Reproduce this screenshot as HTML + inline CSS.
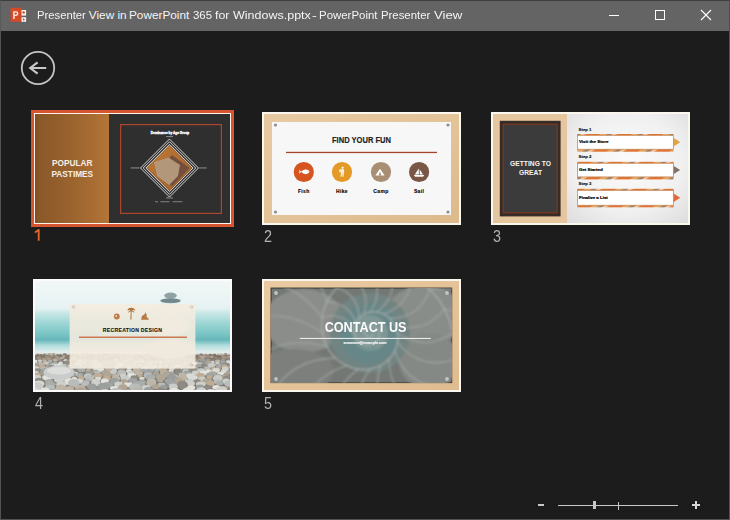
<!DOCTYPE html>
<html><head><meta charset="utf-8">
<style>
*{margin:0;padding:0;box-sizing:border-box}
html,body{width:730px;height:520px;overflow:hidden;background:#1c1c1c;font-family:"Liberation Sans",sans-serif}
.a{position:absolute}
#win{position:absolute;left:0;top:0;width:730px;height:520px;background:#1c1c1c;border-left:1px solid #525252;border-right:1px solid #525252;border-bottom:1px solid #525252}
#tb{position:absolute;left:0;top:0;width:730px;height:31px;background:#646464;border-top:1px solid #3e3e3e;border-right:1px solid #4e4e4e;border-left:1px solid #5a5a5a}
.tw{transform-origin:0 0;position:absolute;top:8px;font-size:11.8px;color:#f4f4f4;white-space:nowrap;line-height:14px}
.num{position:absolute;font-size:15.6px;line-height:16px;color:#b0b0b0;transform:scaleX(0.92);transform-origin:0 0}
.thumb{position:absolute;width:195px;height:109px;overflow:hidden}
</style></head>
<body>
<div id="win"></div>
<div id="tb"></div>
<!-- ppt icon -->
<svg class="a" style="left:8px;top:6px" width="22" height="18" viewBox="0 0 22 18">
<rect x="2.6" y="1.8" width="11.2" height="14" fill="#d64a25"/>
<path d="M5.2 13V5.2H8.2Q10.4 5.2 10.4 7.6Q10.4 10 8.2 10H6.7V13Z M6.7 6.5V8.7H8Q8.9 8.7 8.9 7.6Q8.9 6.5 8 6.5Z" fill="#fbe6de"/>
<rect x="13.5" y="4" width="4.6" height="5.6" fill="#f8f0ec"/>
<rect x="13.5" y="11.2" width="4.6" height="4.6" fill="#f8f0ec"/>
<circle cx="15.6" cy="6.4" r="1.2" fill="#c4482a"/>
<path d="M15 12.3L17 13.5L15 14.7Z" fill="#c4482a"/>
</svg>
<span class="tw" style="left:36.5px;transform:scaleX(0.955)">Presenter</span><span class="tw" style="left:88.8px;transform:scaleX(1.0)">View</span><span class="tw" style="left:117.5px;transform:scaleX(1.0)">in</span><span class="tw" style="left:129px;transform:scaleX(1.0)">PowerPoint</span><span class="tw" style="left:193.3px;transform:scaleX(0.97)">365</span><span class="tw" style="left:214.5px;transform:scaleX(1.05)">for</span><span class="tw" style="left:232.6px;transform:scaleX(1.06)">Windows.pptx</span><span class="tw" style="left:311.8px;transform:scaleX(1.2)">-</span><span class="tw" style="left:319.2px;transform:scaleX(0.97)">PowerPoint</span><span class="tw" style="left:381.3px;transform:scaleX(0.963)">Presenter</span><span class="tw" style="left:433.8px;transform:scaleX(1.12)">View</span>
<!-- window controls -->
<div class="a" style="left:609px;top:15px;width:10px;height:1px;background:#fff"></div>
<div class="a" style="left:655px;top:10px;width:10px;height:10px;border:1px solid #fff"></div>
<svg class="a" style="left:700px;top:9px" width="12" height="12" viewBox="0 0 12 12"><path d="M1 1L11 11M11 1L1 11" stroke="#fff" stroke-width="1.1"/></svg>

<!-- back button -->
<svg class="a" style="left:20px;top:50px" width="36" height="36" viewBox="0 0 36 36">
<circle cx="18" cy="18" r="16.2" fill="none" stroke="#c4c4c4" stroke-width="1.8"/>
<path d="M10.5 18H26.2M17.6 12.4L10.2 18L17.6 23.6" fill="none" stroke="#c8c8c8" stroke-width="2.1" stroke-linejoin="miter"/>
</svg>

<!-- slide 1 selected frame -->
<div class="a" style="left:31px;top:110px;width:203px;height:117px;border:3px solid #d65530"></div>
<div class="a" style="left:34px;top:113px;width:197px;height:111px;border:1px solid #fff4e8"></div>
<div class="thumb" style="left:35px;top:114px;background:#2f2f2f">
<svg width="195" height="109" viewBox="0 0 195 109" style="display:block">
<defs>
<linearGradient id="g1" x1="0" x2="1" y1="0" y2="0"><stop offset="0" stop-color="#7a4f24"/><stop offset="0.05" stop-color="#8a5828"/><stop offset="0.5" stop-color="#9b632e"/><stop offset="0.85" stop-color="#ac6f34"/><stop offset="1" stop-color="#b47638"/></linearGradient>
<linearGradient id="g1b" x1="0" x2="1" y1="0" y2="1"><stop offset="0" stop-color="#c27a35"/><stop offset="1" stop-color="#9a6030"/></linearGradient>
<filter id="b1" x="-20%" y="-20%" width="140%" height="140%"><feGaussianBlur stdDeviation="0.35"/></filter>
</defs>
<rect x="0" y="0" width="74" height="109" fill="url(#g1)"/>
<rect x="85.6" y="10.6" width="100.8" height="88.8" fill="none" stroke="#a8462e" stroke-width="1.25"/>
<g transform="translate(37.3 0) scale(0.89 1)"><text x="0" y="52.4" font-family="Liberation Sans" font-weight="bold" font-size="9.3" fill="#f7efe6" text-anchor="middle">POPULAR</text>
<text x="0" y="63.3" font-family="Liberation Sans" font-weight="bold" font-size="9.3" fill="#f7efe6" text-anchor="middle">PASTIMES</text></g>
<text x="135" y="20.3" font-family="Liberation Sans" font-weight="bold" font-size="3.15" fill="#fff" stroke="#fff" stroke-width="0.3" text-anchor="middle">Dominance by Age Group</text>
<g transform="translate(134.5 54)" filter="url(#b1)">
<path d="M0 -23 L23 0 L0 23 L-23 0Z" fill="url(#g1b)"/>
<path d="M2.5 -13 L20 0 L2.5 18.5 L-12 4Z" fill="#74503c"/>
<path d="M-15.5 -6 L-1 -10.5 L10.5 -3 L8.5 8 L-0.5 17 L-12.5 8Z" fill="#b3977a"/>
<path d="M0 -29 L29 0 L0 29 L-29 0Z" fill="none" stroke="#e4e4e4" stroke-width="0.9"/>
<path d="M0 -26.3 L26.3 0 L0 26.3 L-26.3 0Z" fill="none" stroke="#e4e4e4" stroke-width="0.9"/>
<path d="M0 -23.6 L23.6 0 L0 23.6 L-23.6 0Z" fill="none" stroke="#e4e4e4" stroke-width="0.9"/>
<rect x="-3.5" y="-31.8" width="7" height="0.9" fill="#9a9a9a"/>
<rect x="-38.8" y="-0.5" width="9" height="0.9" fill="#9a9a9a"/>
<rect x="29.8" y="-0.5" width="7.4" height="0.9" fill="#9a9a9a"/>
<rect x="-3.5" y="29.5" width="7" height="0.9" fill="#9a9a9a"/>
<rect x="-14.5" y="33.3" width="3" height="0.9" fill="#8a8a8a"/>
<rect x="-9" y="33.3" width="9" height="0.9" fill="#8a8a8a"/>
<rect x="3" y="33.3" width="10" height="0.9" fill="#8a8a8a"/>
</g>
</svg></div>
<svg class="a" style="left:33px;top:228px" width="10" height="14" viewBox="0 0 10 14"><path d="M4.6 1.2H6.6V12.8H4.8V3.6Q3.6 4.6 1.8 5.2V3.4Q3.6 2.6 4.6 1.2Z" fill="#e56a2a"/></svg>

<!-- slide 2 -->
<div class="a" style="left:262px;top:112px;width:199px;height:113px;background:#fbf7ef"></div>
<div class="thumb" style="left:264px;top:114px;background:#e2c79f">
<svg width="195" height="109" viewBox="0 0 195 109" style="display:block">
<defs>
<linearGradient id="g2" x1="0" x2="1" y1="0" y2="1"><stop offset="0" stop-color="#e8caa2"/><stop offset="0.5" stop-color="#e3c398"/><stop offset="1" stop-color="#dcba8c"/></linearGradient>
</defs>
<rect width="195" height="109" fill="url(#g2)"/>
<rect x="8" y="8" width="179" height="93" fill="#f7f7f8"/>
<circle cx="11.5" cy="11" r="1.6" fill="#8e8e8e"/>
<circle cx="184" cy="11" r="1.6" fill="#8e8e8e"/>
<circle cx="11.5" cy="98" r="1.6" fill="#8e8e8e"/>
<circle cx="184" cy="98" r="1.6" fill="#8e8e8e"/>
<g transform="translate(97.5 0) scale(0.9 1)"><text x="0" y="29" font-family="Liberation Sans" font-weight="bold" font-size="8.4" fill="#222" stroke="#222" stroke-width="0.15" text-anchor="middle">FIND YOUR FUN</text></g>
<rect x="22" y="37.8" width="151" height="1.3" fill="#a3452b"/>
<circle cx="39.8" cy="58" r="10.1" fill="#d5541f"/>
<circle cx="78" cy="58" r="10.1" fill="#e39a26"/>
<circle cx="117" cy="58" r="10.1" fill="#a88f74"/>
<circle cx="155.1" cy="58" r="10.1" fill="#795646"/>
<path d="M35 55.6 L37.3 57.8 L35 60 L35.6 57.8Z M37 57.8 Q40 54.6 43.5 55.8 Q45.3 56.6 45.6 57.8 Q45.3 59 43.5 59.8 Q40 61 37 57.8Z" fill="#fff"/>
<circle cx="44" cy="57.3" r="0.4" fill="#d5541f"/>
<path d="M78.6 52.4 a1.15 1.15 0 1 1 -0.01 0Z M77.3 54.9 L79.6 55.1 L80.4 58 L79.8 58.4 L79.7 62.8 L78.6 62.8 L78.3 59.6 L77.5 62.8 L76.3 62.8 L77.1 58.8 L76.6 57.6Z M75.4 55.4 L77 55 L76.6 58.4 L75.1 58.2Z" fill="#fbeede"/>
<path d="M116 54.8 L120.6 61.6 L111.4 61.6Z" fill="#fff"/><path d="M116 57.6 L117.4 61.6 L114.6 61.6Z" fill="#a88f74"/>
<path d="M154.8 54.6 L154.8 60.4 L150.8 60.4Z M155.7 55.4 L159 60.4 L155.7 60.4Z M149.8 61 L160.4 61 L159 62.8 L151.2 62.8Z" fill="#fff"/>
<text x="39.8" y="78.6" font-family="Liberation Sans" font-weight="bold" font-size="5" fill="#000" stroke="#000" stroke-width="0.12" letter-spacing="0.35" text-anchor="middle">Fish</text>
<text x="78" y="78.6" font-family="Liberation Sans" font-weight="bold" font-size="5" fill="#000" stroke="#000" stroke-width="0.12" letter-spacing="0.35" text-anchor="middle">Hike</text>
<text x="117" y="78.6" font-family="Liberation Sans" font-weight="bold" font-size="5" fill="#000" stroke="#000" stroke-width="0.12" letter-spacing="0.35" text-anchor="middle">Camp</text>
<text x="155.1" y="78.6" font-family="Liberation Sans" font-weight="bold" font-size="5" fill="#000" stroke="#000" stroke-width="0.12" letter-spacing="0.35" text-anchor="middle">Sail</text>
</svg></div>
<div class="num" style="left:264px;top:229px">2</div>

<!-- slide 3 -->
<div class="a" style="left:491px;top:112px;width:199px;height:113px;background:#fbf7ef"></div>
<div class="thumb" style="left:493px;top:114px;background:#eee">
<svg width="195" height="109" viewBox="0 0 195 109" style="display:block">
<defs>
<radialGradient id="g3" cx="0.5" cy="0.45" r="0.75"><stop offset="0" stop-color="#fbfbfb"/><stop offset="0.6" stop-color="#f0f0f0"/><stop offset="1" stop-color="#dcdcdc"/></radialGradient>
<pattern id="stripes" width="18" height="18" patternUnits="userSpaceOnUse" patternTransform="rotate(55)">
<rect width="18" height="18" fill="#de7332"/><rect x="6" width="4" height="18" fill="#e6a660"/><rect x="10" width="3" height="18" fill="#a37d66"/><rect x="13" width="2.5" height="18" fill="#f0c8a0"/>
</pattern>
</defs>
<rect x="74" width="121" height="109" fill="url(#g3)"/>
<rect width="74" height="109" fill="#e5c69e"/>
<rect x="6.8" y="6.8" width="60.8" height="95.6" fill="#352c27"/>
<rect x="10.2" y="10.2" width="54" height="88.6" fill="#3c3b3b" stroke="#84391e" stroke-width="1.1"/>
<g transform="translate(37.5 0) scale(0.92 1)"><text x="0" y="52.4" font-family="Liberation Sans" font-weight="bold" font-size="7.3" fill="#f4f4f4" text-anchor="middle">GETTING TO</text>
<text x="0" y="61.2" font-family="Liberation Sans" font-weight="bold" font-size="7.3" fill="#f4f4f4" text-anchor="middle">GREAT</text></g>
<text x="85.6" y="17.4" font-family="Liberation Sans" font-weight="bold" font-size="4.3" fill="#111" stroke="#111" stroke-width="0.15">Step 1</text>
<rect x="84.3" y="20" width="96.2" height="17.7" fill="url(#stripes)"/>
<path d="M180 23.6 L187.2 28.2 L180 32.8Z" fill="#e0a445"/>
<rect x="84.5" y="21.4" width="95.8" height="13.8" fill="#fff" stroke="#c88a5a" stroke-width="0.7"/>
<text x="86" y="29.2" font-family="Liberation Sans" font-weight="bold" font-size="4.4" fill="#000" stroke="#000" stroke-width="0.22">Visit the Store</text>
<text x="85.6" y="43.8" font-family="Liberation Sans" font-weight="bold" font-size="4.3" fill="#111" stroke="#111" stroke-width="0.15">Step 2</text>
<rect x="84.3" y="47.8" width="96.2" height="17.6" fill="url(#stripes)"/>
<path d="M180 51.4 L187.2 56 L180 60.6Z" fill="#85716a"/>
<rect x="84.5" y="49.3" width="95.8" height="13.6" fill="#fff" stroke="#c88a5a" stroke-width="0.7"/>
<text x="86" y="57.2" font-family="Liberation Sans" font-weight="bold" font-size="4.4" fill="#000" stroke="#000" stroke-width="0.22">Get Started</text>
<text x="85.6" y="71.4" font-family="Liberation Sans" font-weight="bold" font-size="4.3" fill="#111" stroke="#111" stroke-width="0.15">Step 3</text>
<rect x="84.3" y="74.8" width="96.2" height="18.5" fill="url(#stripes)"/>
<path d="M180 79 L187.2 83.8 L180 88.6Z" fill="#e36a3a"/>
<rect x="84.5" y="76.5" width="95.8" height="14.7" fill="#fff" stroke="#c88a5a" stroke-width="0.7"/>
<text x="86" y="85.1" font-family="Liberation Sans" font-weight="bold" font-size="4.4" fill="#000" stroke="#000" stroke-width="0.22">Finalize a List</text>

</svg></div>
<div class="num" style="left:493px;top:229px">3</div>

<!-- slide 4 -->
<div class="a" style="left:33px;top:279px;width:199px;height:113px;background:#fbfbfb"></div>
<div class="thumb" style="left:35px;top:281px;background:#cfd8d4">
<svg width="195" height="109" viewBox="0 0 195 109" style="display:block">
<defs>
<linearGradient id="g4" x1="0" x2="0" y1="0" y2="1">
<stop offset="0" stop-color="#f2f7f7"/><stop offset="0.25" stop-color="#e6f2f2"/><stop offset="0.3" stop-color="#c4e6e5"/>
<stop offset="0.4" stop-color="#98d4d2"/><stop offset="0.48" stop-color="#7cc6c6"/><stop offset="0.54" stop-color="#66b6b9"/>
<stop offset="0.59" stop-color="#b0dcdc"/><stop offset="0.655" stop-color="#e4eeee"/><stop offset="0.685" stop-color="#c8c2b6"/><stop offset="0.73" stop-color="#b8b0a2"/><stop offset="1" stop-color="#a8a092"/>
</linearGradient>
<filter id="bl4" x="-5%" y="-5%" width="110%" height="110%"><feGaussianBlur stdDeviation="0.75"/></filter>
<filter id="bl4b"><feGaussianBlur stdDeviation="1.2"/></filter>
<filter id="bl4s" x="-20%" y="-20%" width="140%" height="140%"><feGaussianBlur stdDeviation="0.3"/></filter>
</defs>
<rect width="195" height="109" fill="url(#g4)"/>
<g filter="url(#bl4)"><rect x="0" y="74" width="195" height="40" fill="#857b70"/><ellipse cx="-1.5" cy="74.7" rx="2.0" ry="1.3" fill="#b4aa9c"/><ellipse cx="2.8" cy="74.0" rx="1.8" ry="1.3" fill="#8a7e72"/><ellipse cx="6.1" cy="73.9" rx="1.3" ry="0.8" fill="#7e746a"/><ellipse cx="9.7" cy="73.9" rx="2.1" ry="1.4" fill="#9a8e80"/><ellipse cx="14.4" cy="73.1" rx="2.1" ry="1.2" fill="#b4aa9c"/><ellipse cx="18.5" cy="73.0" rx="1.8" ry="0.9" fill="#a89c8c"/><ellipse cx="22.2" cy="73.9" rx="1.4" ry="0.9" fill="#9a8e80"/><ellipse cx="25.6" cy="74.3" rx="1.6" ry="1.0" fill="#8a7e72"/><ellipse cx="29.7" cy="73.4" rx="2.1" ry="1.1" fill="#8a7e72"/><ellipse cx="34.6" cy="75.0" rx="2.2" ry="1.5" fill="#7e746a"/><ellipse cx="38.8" cy="73.4" rx="1.9" ry="1.2" fill="#b4aa9c"/><ellipse cx="43.4" cy="74.9" rx="2.2" ry="1.3" fill="#a89c8c"/><ellipse cx="47.5" cy="73.1" rx="1.6" ry="1.0" fill="#a89c8c"/><ellipse cx="51.3" cy="73.0" rx="2.0" ry="1.4" fill="#b4aa9c"/><ellipse cx="55.4" cy="74.2" rx="1.9" ry="1.2" fill="#7e746a"/><ellipse cx="59.6" cy="74.3" rx="1.9" ry="1.0" fill="#8a7e72"/><ellipse cx="63.6" cy="73.5" rx="1.6" ry="1.1" fill="#a89c8c"/><ellipse cx="67.7" cy="73.7" rx="2.2" ry="1.2" fill="#b4aa9c"/><ellipse cx="72.3" cy="73.8" rx="2.0" ry="1.4" fill="#8a7e72"/><ellipse cx="77.2" cy="74.0" rx="2.3" ry="1.4" fill="#a89c8c"/><ellipse cx="81.3" cy="74.1" rx="1.5" ry="1.1" fill="#8a7e72"/><ellipse cx="84.8" cy="74.7" rx="1.7" ry="1.1" fill="#9a8e80"/><ellipse cx="88.2" cy="73.5" rx="1.6" ry="0.9" fill="#b4aa9c"/><ellipse cx="92.2" cy="75.0" rx="2.2" ry="1.4" fill="#8a7e72"/><ellipse cx="96.7" cy="74.8" rx="1.8" ry="1.0" fill="#7e746a"/><ellipse cx="101.0" cy="74.6" rx="2.3" ry="1.6" fill="#a89c8c"/><ellipse cx="105.7" cy="74.8" rx="1.9" ry="1.1" fill="#7e746a"/><ellipse cx="109.4" cy="74.5" rx="1.4" ry="0.9" fill="#8a7e72"/><ellipse cx="112.9" cy="73.5" rx="2.0" ry="1.4" fill="#9a8e80"/><ellipse cx="116.7" cy="73.5" rx="1.5" ry="1.1" fill="#b4aa9c"/><ellipse cx="120.8" cy="73.3" rx="2.3" ry="1.6" fill="#8a7e72"/><ellipse cx="124.9" cy="73.1" rx="1.5" ry="1.0" fill="#8a7e72"/><ellipse cx="128.1" cy="73.8" rx="1.6" ry="0.9" fill="#a89c8c"/><ellipse cx="132.2" cy="73.4" rx="1.9" ry="1.0" fill="#b4aa9c"/><ellipse cx="136.6" cy="74.7" rx="2.1" ry="1.3" fill="#7e746a"/><ellipse cx="141.3" cy="74.7" rx="2.1" ry="1.0" fill="#b4aa9c"/><ellipse cx="145.5" cy="73.5" rx="1.9" ry="1.3" fill="#8a7e72"/><ellipse cx="149.4" cy="73.3" rx="1.6" ry="0.8" fill="#b4aa9c"/><ellipse cx="153.8" cy="74.0" rx="2.3" ry="1.6" fill="#7e746a"/><ellipse cx="158.3" cy="74.5" rx="1.8" ry="0.9" fill="#7e746a"/><ellipse cx="162.4" cy="74.5" rx="1.6" ry="1.1" fill="#7e746a"/><ellipse cx="166.1" cy="73.7" rx="1.9" ry="1.1" fill="#8a7e72"/><ellipse cx="170.6" cy="74.3" rx="2.3" ry="1.2" fill="#9a8e80"/><ellipse cx="175.4" cy="74.2" rx="2.1" ry="1.5" fill="#7e746a"/><ellipse cx="179.5" cy="74.0" rx="1.9" ry="1.2" fill="#7e746a"/><ellipse cx="183.4" cy="73.1" rx="1.4" ry="0.7" fill="#b4aa9c"/><ellipse cx="186.9" cy="73.9" rx="1.9" ry="1.1" fill="#b4aa9c"/><ellipse cx="190.7" cy="73.1" rx="1.7" ry="1.0" fill="#9a8e80"/><ellipse cx="194.2" cy="74.6" rx="1.7" ry="1.1" fill="#8a7e72"/><ellipse cx="198.4" cy="74.4" rx="2.1" ry="1.3" fill="#7e746a"/><ellipse cx="-0.9" cy="75.1" rx="2.4" ry="1.4" fill="#7e746a"/><ellipse cx="4.0" cy="74.9" rx="2.1" ry="1.5" fill="#8a7e72"/><ellipse cx="8.2" cy="74.7" rx="1.8" ry="1.0" fill="#7e746a"/><ellipse cx="12.5" cy="76.3" rx="2.1" ry="1.2" fill="#b4aa9c"/><ellipse cx="16.7" cy="75.0" rx="1.6" ry="0.9" fill="#a89c8c"/><ellipse cx="20.3" cy="74.9" rx="1.6" ry="0.8" fill="#9a8e80"/><ellipse cx="24.4" cy="74.7" rx="2.3" ry="1.2" fill="#7e746a"/><ellipse cx="28.8" cy="75.2" rx="1.7" ry="1.0" fill="#b4aa9c"/><ellipse cx="32.9" cy="75.6" rx="2.0" ry="1.2" fill="#8a7e72"/><ellipse cx="36.9" cy="74.4" rx="1.5" ry="1.1" fill="#8a7e72"/><ellipse cx="41.3" cy="74.4" rx="2.4" ry="1.6" fill="#9a8e80"/><ellipse cx="45.9" cy="74.8" rx="1.8" ry="1.1" fill="#b4aa9c"/><ellipse cx="49.8" cy="74.7" rx="2.0" ry="1.0" fill="#a89c8c"/><ellipse cx="53.5" cy="75.9" rx="1.4" ry="0.7" fill="#7e746a"/><ellipse cx="57.4" cy="75.1" rx="2.0" ry="1.0" fill="#8a7e72"/><ellipse cx="61.6" cy="76.2" rx="1.6" ry="1.0" fill="#7e746a"/><ellipse cx="65.2" cy="75.2" rx="1.4" ry="0.9" fill="#9a8e80"/><ellipse cx="69.6" cy="74.4" rx="2.4" ry="1.6" fill="#8a7e72"/><ellipse cx="74.6" cy="75.7" rx="2.0" ry="1.3" fill="#b4aa9c"/><ellipse cx="78.7" cy="74.9" rx="1.6" ry="0.8" fill="#a89c8c"/><ellipse cx="83.0" cy="74.7" rx="2.3" ry="1.2" fill="#9a8e80"/><ellipse cx="87.8" cy="74.4" rx="2.3" ry="1.3" fill="#a89c8c"/><ellipse cx="92.1" cy="74.6" rx="1.9" ry="1.2" fill="#b4aa9c"/><ellipse cx="96.6" cy="74.7" rx="2.4" ry="1.5" fill="#b4aa9c"/><ellipse cx="101.6" cy="76.0" rx="2.4" ry="1.4" fill="#a89c8c"/><ellipse cx="105.7" cy="75.6" rx="1.4" ry="0.8" fill="#7e746a"/><ellipse cx="108.9" cy="74.6" rx="1.4" ry="0.8" fill="#b4aa9c"/><ellipse cx="113.2" cy="74.7" rx="2.3" ry="1.6" fill="#9a8e80"/><ellipse cx="118.3" cy="76.2" rx="2.4" ry="1.5" fill="#9a8e80"/><ellipse cx="123.4" cy="74.3" rx="2.4" ry="1.7" fill="#a89c8c"/><ellipse cx="128.1" cy="75.6" rx="2.0" ry="1.3" fill="#b4aa9c"/><ellipse cx="132.7" cy="74.7" rx="2.4" ry="1.5" fill="#b4aa9c"/><ellipse cx="137.7" cy="76.1" rx="2.0" ry="1.3" fill="#a89c8c"/><ellipse cx="142.0" cy="75.4" rx="2.0" ry="1.2" fill="#a89c8c"/><ellipse cx="147.0" cy="76.3" rx="2.4" ry="1.7" fill="#9a8e80"/><ellipse cx="152.0" cy="75.3" rx="2.2" ry="1.2" fill="#7e746a"/><ellipse cx="156.7" cy="75.6" rx="1.9" ry="1.0" fill="#8a7e72"/><ellipse cx="161.0" cy="75.6" rx="1.9" ry="1.1" fill="#8a7e72"/><ellipse cx="165.0" cy="75.3" rx="1.8" ry="1.1" fill="#b4aa9c"/><ellipse cx="169.3" cy="75.5" rx="2.3" ry="1.3" fill="#a89c8c"/><ellipse cx="174.3" cy="75.1" rx="2.2" ry="1.4" fill="#8a7e72"/><ellipse cx="178.2" cy="74.9" rx="1.4" ry="0.9" fill="#7e746a"/><ellipse cx="182.0" cy="75.9" rx="1.9" ry="1.1" fill="#7e746a"/><ellipse cx="185.7" cy="75.3" rx="1.4" ry="0.8" fill="#8a7e72"/><ellipse cx="189.3" cy="75.7" rx="1.8" ry="1.2" fill="#7e746a"/><ellipse cx="192.9" cy="75.8" rx="1.7" ry="0.9" fill="#a89c8c"/><ellipse cx="196.4" cy="76.0" rx="1.5" ry="1.1" fill="#7e746a"/><ellipse cx="200.0" cy="74.6" rx="1.5" ry="0.8" fill="#8a7e72"/><ellipse cx="-0.9" cy="76.7" rx="2.3" ry="1.3" fill="#8a7e72"/><ellipse cx="3.9" cy="77.1" rx="2.4" ry="1.4" fill="#9a8e80"/><ellipse cx="8.8" cy="77.4" rx="2.2" ry="1.3" fill="#8a7e72"/><ellipse cx="13.1" cy="75.9" rx="1.8" ry="1.2" fill="#9a8e80"/><ellipse cx="17.7" cy="76.9" rx="2.2" ry="1.1" fill="#8a7e72"/><ellipse cx="22.3" cy="76.6" rx="2.1" ry="1.5" fill="#a89c8c"/><ellipse cx="27.1" cy="77.2" rx="2.6" ry="1.4" fill="#b4aa9c"/><ellipse cx="32.1" cy="76.6" rx="2.0" ry="1.2" fill="#8a7e72"/><ellipse cx="36.9" cy="77.2" rx="2.5" ry="1.7" fill="#8a7e72"/><ellipse cx="42.3" cy="76.0" rx="2.3" ry="1.3" fill="#8a7e72"/><ellipse cx="47.0" cy="77.6" rx="1.9" ry="1.1" fill="#8a7e72"/><ellipse cx="51.0" cy="77.4" rx="1.7" ry="0.9" fill="#8a7e72"/><ellipse cx="54.6" cy="76.9" rx="1.6" ry="1.0" fill="#9a8e80"/><ellipse cx="58.0" cy="76.8" rx="1.6" ry="1.1" fill="#8a7e72"/><ellipse cx="61.5" cy="76.2" rx="1.8" ry="1.1" fill="#9a8e80"/><ellipse cx="66.0" cy="76.5" rx="2.4" ry="1.7" fill="#9a8e80"/><ellipse cx="71.5" cy="75.8" rx="2.4" ry="1.6" fill="#b4aa9c"/><ellipse cx="76.8" cy="76.7" rx="2.5" ry="1.7" fill="#7e746a"/><ellipse cx="81.6" cy="77.2" rx="2.2" ry="1.5" fill="#a89c8c"/><ellipse cx="86.5" cy="76.4" rx="2.1" ry="1.1" fill="#a89c8c"/><ellipse cx="90.7" cy="75.8" rx="1.8" ry="1.3" fill="#a89c8c"/><ellipse cx="94.4" cy="77.2" rx="1.6" ry="0.9" fill="#8a7e72"/><ellipse cx="98.0" cy="77.5" rx="1.8" ry="1.0" fill="#b4aa9c"/><ellipse cx="102.3" cy="77.1" rx="2.3" ry="1.6" fill="#7e746a"/><ellipse cx="107.2" cy="77.1" rx="2.0" ry="1.3" fill="#a89c8c"/><ellipse cx="111.5" cy="76.1" rx="2.2" ry="1.4" fill="#b4aa9c"/><ellipse cx="116.3" cy="76.1" rx="2.0" ry="1.1" fill="#9a8e80"/><ellipse cx="121.1" cy="77.4" rx="2.6" ry="1.3" fill="#8a7e72"/><ellipse cx="126.1" cy="76.1" rx="1.8" ry="1.0" fill="#b4aa9c"/><ellipse cx="130.9" cy="76.6" rx="2.5" ry="1.4" fill="#a89c8c"/><ellipse cx="136.2" cy="76.3" rx="2.5" ry="1.7" fill="#8a7e72"/><ellipse cx="141.5" cy="77.4" rx="2.3" ry="1.5" fill="#9a8e80"/><ellipse cx="146.7" cy="77.3" rx="2.6" ry="1.5" fill="#b4aa9c"/><ellipse cx="152.2" cy="76.2" rx="2.3" ry="1.2" fill="#7e746a"/><ellipse cx="157.1" cy="77.3" rx="2.4" ry="1.5" fill="#8a7e72"/><ellipse cx="162.7" cy="76.7" rx="2.5" ry="1.7" fill="#8a7e72"/><ellipse cx="167.7" cy="76.5" rx="2.1" ry="1.5" fill="#b4aa9c"/><ellipse cx="172.8" cy="76.0" rx="2.4" ry="1.5" fill="#9a8e80"/><ellipse cx="176.9" cy="75.8" rx="1.6" ry="1.0" fill="#b4aa9c"/><ellipse cx="180.6" cy="77.0" rx="1.6" ry="1.0" fill="#a89c8c"/><ellipse cx="184.6" cy="75.9" rx="1.8" ry="1.2" fill="#7e746a"/><ellipse cx="189.0" cy="76.6" rx="2.3" ry="1.6" fill="#a89c8c"/><ellipse cx="194.4" cy="76.0" rx="2.5" ry="1.4" fill="#a89c8c"/><ellipse cx="199.8" cy="77.3" rx="2.6" ry="1.5" fill="#8a7e72"/><ellipse cx="-0.1" cy="78.8" rx="1.6" ry="0.9" fill="#8a7e72"/><ellipse cx="4.3" cy="77.5" rx="2.2" ry="1.1" fill="#9a8e80"/><ellipse cx="9.2" cy="78.4" rx="2.3" ry="1.6" fill="#a89c8c"/><ellipse cx="14.2" cy="78.0" rx="2.5" ry="1.3" fill="#a89c8c"/><ellipse cx="19.5" cy="78.7" rx="2.5" ry="1.4" fill="#a89c8c"/><ellipse cx="24.4" cy="78.8" rx="1.9" ry="1.1" fill="#a89c8c"/><ellipse cx="28.7" cy="79.1" rx="1.8" ry="1.3" fill="#7e746a"/><ellipse cx="33.4" cy="77.5" rx="2.1" ry="1.4" fill="#8a7e72"/><ellipse cx="38.8" cy="77.3" rx="2.8" ry="1.9" fill="#b4aa9c"/><ellipse cx="44.3" cy="78.8" rx="2.2" ry="1.5" fill="#8a7e72"/><ellipse cx="49.5" cy="79.1" rx="2.3" ry="1.2" fill="#9a8e80"/><ellipse cx="54.8" cy="78.9" rx="2.5" ry="1.2" fill="#9a8e80"/><ellipse cx="60.7" cy="77.9" rx="2.8" ry="1.4" fill="#b4aa9c"/><ellipse cx="66.0" cy="77.5" rx="2.1" ry="1.2" fill="#a89c8c"/><ellipse cx="70.9" cy="79.0" rx="2.5" ry="1.4" fill="#9a8e80"/><ellipse cx="76.3" cy="77.7" rx="2.7" ry="1.7" fill="#7e746a"/><ellipse cx="81.6" cy="78.2" rx="2.2" ry="1.2" fill="#7e746a"/><ellipse cx="86.9" cy="77.9" rx="2.4" ry="1.6" fill="#b4aa9c"/><ellipse cx="92.2" cy="77.7" rx="2.6" ry="1.7" fill="#b4aa9c"/><ellipse cx="97.3" cy="78.7" rx="2.3" ry="1.3" fill="#7e746a"/><ellipse cx="102.6" cy="77.6" rx="2.5" ry="1.6" fill="#a89c8c"/><ellipse cx="107.5" cy="77.4" rx="2.2" ry="1.6" fill="#8a7e72"/><ellipse cx="112.3" cy="78.4" rx="1.9" ry="1.3" fill="#b4aa9c"/><ellipse cx="116.6" cy="78.5" rx="2.2" ry="1.1" fill="#7e746a"/><ellipse cx="121.1" cy="77.6" rx="1.7" ry="1.0" fill="#9a8e80"/><ellipse cx="125.7" cy="78.2" rx="2.4" ry="1.5" fill="#7e746a"/><ellipse cx="131.1" cy="79.2" rx="2.4" ry="1.5" fill="#b4aa9c"/><ellipse cx="136.2" cy="78.0" rx="2.1" ry="1.3" fill="#8a7e72"/><ellipse cx="140.3" cy="79.0" rx="1.9" ry="1.1" fill="#8a7e72"/><ellipse cx="144.7" cy="78.2" rx="1.9" ry="1.3" fill="#b4aa9c"/><ellipse cx="149.7" cy="77.7" rx="2.7" ry="1.4" fill="#a89c8c"/><ellipse cx="155.3" cy="78.5" rx="2.2" ry="1.4" fill="#a89c8c"/><ellipse cx="160.2" cy="78.5" rx="1.9" ry="1.0" fill="#a89c8c"/><ellipse cx="164.5" cy="78.4" rx="1.8" ry="1.1" fill="#a89c8c"/><ellipse cx="169.3" cy="78.9" rx="2.4" ry="1.2" fill="#9a8e80"/><ellipse cx="174.7" cy="79.1" rx="2.6" ry="1.7" fill="#8a7e72"/><ellipse cx="179.7" cy="77.5" rx="2.0" ry="1.3" fill="#8a7e72"/><ellipse cx="184.4" cy="78.0" rx="2.0" ry="1.3" fill="#8a7e72"/><ellipse cx="189.1" cy="78.5" rx="2.0" ry="1.3" fill="#8a7e72"/><ellipse cx="193.5" cy="77.4" rx="1.7" ry="1.2" fill="#9a8e80"/><ellipse cx="197.9" cy="77.7" rx="2.4" ry="1.5" fill="#b4aa9c"/><ellipse cx="0.5" cy="79.9" rx="1.8" ry="1.2" fill="#e2e2de"/><ellipse cx="4.9" cy="79.7" rx="2.4" ry="1.2" fill="#c8ccc8"/><ellipse cx="9.9" cy="80.5" rx="2.3" ry="1.4" fill="#bdb5a8"/><ellipse cx="15.1" cy="80.3" rx="2.2" ry="1.4" fill="#b8bcba"/><ellipse cx="20.4" cy="79.3" rx="2.4" ry="1.4" fill="#bdb5a8"/><ellipse cx="25.7" cy="80.3" rx="2.3" ry="1.5" fill="#8e8a84"/><ellipse cx="30.5" cy="79.4" rx="2.1" ry="1.5" fill="#d8dad6"/><ellipse cx="35.4" cy="79.7" rx="2.1" ry="1.4" fill="#c0ac94"/><ellipse cx="40.0" cy="79.0" rx="1.8" ry="1.0" fill="#c0ac94"/><ellipse cx="44.8" cy="79.4" rx="2.5" ry="1.5" fill="#cfd0cb"/><ellipse cx="49.7" cy="79.1" rx="2.0" ry="1.4" fill="#a9aeac"/><ellipse cx="54.1" cy="79.8" rx="1.8" ry="1.0" fill="#cfd0cb"/><ellipse cx="59.0" cy="80.3" rx="2.4" ry="1.4" fill="#e2e2de"/><ellipse cx="64.4" cy="80.7" rx="2.7" ry="1.6" fill="#8e8a84"/><ellipse cx="69.8" cy="80.4" rx="2.2" ry="1.2" fill="#bdb5a8"/><ellipse cx="74.7" cy="80.0" rx="2.5" ry="1.4" fill="#9a9e9c"/><ellipse cx="80.4" cy="79.3" rx="2.7" ry="1.7" fill="#cfd0cb"/><ellipse cx="85.7" cy="80.1" rx="2.5" ry="1.4" fill="#b8bcba"/><ellipse cx="90.8" cy="79.6" rx="2.0" ry="1.2" fill="#cfd0cb"/><ellipse cx="96.0" cy="78.8" rx="3.0" ry="2.0" fill="#bdb5a8"/><ellipse cx="101.3" cy="80.7" rx="1.9" ry="1.3" fill="#e2e2de"/><ellipse cx="106.5" cy="79.9" rx="2.9" ry="1.8" fill="#c8ccc8"/><ellipse cx="112.2" cy="79.4" rx="2.5" ry="1.3" fill="#8e8a84"/><ellipse cx="116.7" cy="79.9" rx="1.7" ry="1.2" fill="#a9aeac"/><ellipse cx="121.5" cy="79.8" rx="2.4" ry="1.3" fill="#a0a4a4"/><ellipse cx="127.5" cy="80.0" rx="3.0" ry="1.7" fill="#8e8a84"/><ellipse cx="133.0" cy="80.3" rx="2.4" ry="1.4" fill="#b0a696"/><ellipse cx="138.0" cy="79.2" rx="2.3" ry="1.5" fill="#9a9e9c"/><ellipse cx="142.9" cy="80.2" rx="2.0" ry="1.1" fill="#b0a696"/><ellipse cx="147.6" cy="79.8" rx="2.2" ry="1.4" fill="#b8bcba"/><ellipse cx="152.3" cy="79.1" rx="2.0" ry="1.4" fill="#a9aeac"/><ellipse cx="156.9" cy="79.2" rx="1.9" ry="1.3" fill="#a0a4a4"/><ellipse cx="162.0" cy="80.5" rx="2.5" ry="1.4" fill="#9a9e9c"/><ellipse cx="167.7" cy="79.3" rx="2.8" ry="1.5" fill="#9a9e9c"/><ellipse cx="173.1" cy="79.2" rx="2.1" ry="1.2" fill="#9a9e9c"/><ellipse cx="177.8" cy="80.5" rx="1.9" ry="1.3" fill="#9a9e9c"/><ellipse cx="182.6" cy="80.0" rx="2.7" ry="1.5" fill="#bdb5a8"/><ellipse cx="188.0" cy="79.4" rx="2.2" ry="1.4" fill="#9a9e9c"/><ellipse cx="193.4" cy="80.4" rx="2.7" ry="1.4" fill="#b8bcba"/><ellipse cx="198.9" cy="79.1" rx="2.6" ry="1.5" fill="#e2e2de"/><ellipse cx="0.1" cy="82.2" rx="2.8" ry="1.5" fill="#e2e2de"/><ellipse cx="5.2" cy="82.4" rx="1.9" ry="1.1" fill="#e2e2de"/><ellipse cx="9.7" cy="82.2" rx="2.2" ry="1.5" fill="#bdb5a8"/><ellipse cx="14.4" cy="80.6" rx="2.2" ry="1.5" fill="#a9aeac"/><ellipse cx="19.9" cy="82.4" rx="2.8" ry="1.6" fill="#a9aeac"/><ellipse cx="25.7" cy="82.1" rx="2.3" ry="1.6" fill="#d8dad6"/><ellipse cx="31.7" cy="81.7" rx="3.2" ry="2.2" fill="#8e8a84"/><ellipse cx="37.5" cy="82.2" rx="1.9" ry="1.0" fill="#9a9e9c"/><ellipse cx="43.0" cy="82.3" rx="2.9" ry="2.0" fill="#e2e2de"/><ellipse cx="49.0" cy="81.2" rx="2.3" ry="1.3" fill="#d8dad6"/><ellipse cx="54.8" cy="81.2" rx="2.9" ry="1.8" fill="#9a9e9c"/><ellipse cx="61.3" cy="80.8" rx="2.9" ry="1.8" fill="#b8bcba"/><ellipse cx="67.2" cy="81.8" rx="2.4" ry="1.4" fill="#a9aeac"/><ellipse cx="72.1" cy="82.3" rx="1.9" ry="1.0" fill="#c0ac94"/><ellipse cx="76.8" cy="80.9" rx="2.7" ry="1.6" fill="#a0a4a4"/><ellipse cx="82.5" cy="81.4" rx="2.6" ry="1.7" fill="#c0ac94"/><ellipse cx="87.7" cy="80.8" rx="2.0" ry="1.3" fill="#a0a4a4"/><ellipse cx="93.3" cy="81.9" rx="3.0" ry="2.1" fill="#a0a4a4"/><ellipse cx="99.0" cy="82.3" rx="2.0" ry="1.1" fill="#a0a4a4"/><ellipse cx="104.6" cy="80.8" rx="3.0" ry="1.8" fill="#bdb5a8"/><ellipse cx="110.4" cy="82.0" rx="2.4" ry="1.6" fill="#bdb5a8"/><ellipse cx="115.7" cy="81.3" rx="2.4" ry="1.7" fill="#b8bcba"/><ellipse cx="120.9" cy="81.8" rx="2.0" ry="1.4" fill="#c0ac94"/><ellipse cx="125.8" cy="81.2" rx="2.2" ry="1.5" fill="#e2e2de"/><ellipse cx="131.2" cy="81.1" rx="2.6" ry="1.3" fill="#b8bcba"/><ellipse cx="137.1" cy="80.5" rx="2.9" ry="2.0" fill="#9a9e9c"/><ellipse cx="143.1" cy="82.2" rx="2.3" ry="1.6" fill="#b8bcba"/><ellipse cx="148.7" cy="80.7" rx="2.7" ry="1.9" fill="#9a9e9c"/><ellipse cx="153.9" cy="81.9" rx="2.0" ry="1.0" fill="#a9aeac"/><ellipse cx="159.2" cy="81.5" rx="3.1" ry="1.9" fill="#b0a696"/><ellipse cx="165.2" cy="82.4" rx="2.6" ry="1.4" fill="#b8bcba"/><ellipse cx="170.6" cy="81.7" rx="2.4" ry="1.4" fill="#9a9e9c"/><ellipse cx="176.7" cy="81.6" rx="2.9" ry="1.6" fill="#d8dad6"/><ellipse cx="182.4" cy="82.1" rx="2.3" ry="1.4" fill="#c8ccc8"/><ellipse cx="187.9" cy="81.3" rx="3.0" ry="1.6" fill="#a0a4a4"/><ellipse cx="193.7" cy="81.2" rx="2.2" ry="1.4" fill="#d8dad6"/><ellipse cx="198.8" cy="82.0" rx="2.4" ry="1.3" fill="#c0ac94"/><ellipse cx="0.1" cy="83.7" rx="3.4" ry="2.0" fill="#9a9e9c"/><ellipse cx="6.4" cy="83.5" rx="2.8" ry="1.9" fill="#bdb5a8"/><ellipse cx="11.8" cy="82.4" rx="2.2" ry="1.4" fill="#c8ccc8"/><ellipse cx="17.6" cy="84.1" rx="3.4" ry="2.0" fill="#b8bcba"/><ellipse cx="24.4" cy="83.5" rx="2.8" ry="1.6" fill="#e2e2de"/><ellipse cx="30.1" cy="83.9" rx="2.1" ry="1.2" fill="#a0a4a4"/><ellipse cx="35.4" cy="84.1" rx="3.0" ry="1.9" fill="#b0a696"/><ellipse cx="41.4" cy="83.3" rx="2.1" ry="1.1" fill="#d8dad6"/><ellipse cx="47.5" cy="82.8" rx="3.1" ry="1.7" fill="#a9aeac"/><ellipse cx="53.6" cy="84.2" rx="2.1" ry="1.2" fill="#a9aeac"/><ellipse cx="59.2" cy="83.2" rx="3.0" ry="1.9" fill="#e2e2de"/><ellipse cx="65.1" cy="83.4" rx="2.8" ry="1.9" fill="#cfd0cb"/><ellipse cx="70.2" cy="82.7" rx="2.1" ry="1.1" fill="#b0a696"/><ellipse cx="76.2" cy="82.6" rx="3.4" ry="2.1" fill="#b0a696"/><ellipse cx="82.8" cy="83.3" rx="2.8" ry="1.6" fill="#b8bcba"/><ellipse cx="88.3" cy="82.8" rx="1.9" ry="1.3" fill="#a9aeac"/><ellipse cx="93.1" cy="83.7" rx="2.4" ry="1.5" fill="#a9aeac"/><ellipse cx="99.0" cy="83.7" rx="2.7" ry="1.6" fill="#cfd0cb"/><ellipse cx="103.8" cy="83.1" rx="2.0" ry="1.3" fill="#8e8a84"/><ellipse cx="109.1" cy="82.9" rx="2.8" ry="1.6" fill="#9a9e9c"/><ellipse cx="115.3" cy="82.7" rx="2.6" ry="1.7" fill="#cfd0cb"/><ellipse cx="120.1" cy="82.3" rx="2.0" ry="1.0" fill="#c8ccc8"/><ellipse cx="125.4" cy="84.1" rx="2.6" ry="1.6" fill="#bdb5a8"/><ellipse cx="131.0" cy="84.1" rx="2.6" ry="1.7" fill="#c0ac94"/><ellipse cx="137.0" cy="82.7" rx="3.2" ry="2.1" fill="#a0a4a4"/><ellipse cx="144.3" cy="83.0" rx="3.2" ry="2.0" fill="#b0a696"/><ellipse cx="149.9" cy="82.7" rx="2.1" ry="1.4" fill="#cfd0cb"/><ellipse cx="154.3" cy="83.3" rx="2.0" ry="1.4" fill="#9a9e9c"/><ellipse cx="159.8" cy="82.4" rx="3.1" ry="1.6" fill="#e2e2de"/><ellipse cx="166.8" cy="84.2" rx="3.4" ry="1.7" fill="#a9aeac"/><ellipse cx="173.8" cy="82.4" rx="3.4" ry="2.4" fill="#b0a696"/><ellipse cx="179.8" cy="83.8" rx="2.0" ry="1.2" fill="#bdb5a8"/><ellipse cx="184.7" cy="84.1" rx="2.1" ry="1.3" fill="#a9aeac"/><ellipse cx="190.7" cy="83.3" rx="3.2" ry="1.8" fill="#8e8a84"/><ellipse cx="197.5" cy="82.8" rx="3.3" ry="1.7" fill="#cfd0cb"/><ellipse cx="0.6" cy="85.9" rx="2.8" ry="1.5" fill="#c0ac94"/><ellipse cx="7.3" cy="85.9" rx="3.0" ry="2.1" fill="#c0ac94"/><ellipse cx="13.5" cy="85.3" rx="2.8" ry="1.8" fill="#a0a4a4"/><ellipse cx="20.7" cy="85.4" rx="3.5" ry="2.3" fill="#d8dad6"/><ellipse cx="28.1" cy="84.8" rx="3.4" ry="1.9" fill="#cfd0cb"/><ellipse cx="34.6" cy="85.7" rx="2.3" ry="1.6" fill="#cfd0cb"/><ellipse cx="39.7" cy="85.8" rx="2.5" ry="1.5" fill="#a0a4a4"/><ellipse cx="45.2" cy="84.2" rx="2.4" ry="1.3" fill="#cfd0cb"/><ellipse cx="50.8" cy="84.9" rx="2.4" ry="1.7" fill="#b0a696"/><ellipse cx="56.6" cy="85.1" rx="3.0" ry="2.1" fill="#a9aeac"/><ellipse cx="62.9" cy="85.9" rx="2.5" ry="1.4" fill="#cfd0cb"/><ellipse cx="68.4" cy="85.9" rx="2.6" ry="1.4" fill="#b8bcba"/><ellipse cx="73.6" cy="84.3" rx="2.4" ry="1.5" fill="#9a9e9c"/><ellipse cx="78.8" cy="84.3" rx="2.5" ry="1.6" fill="#9a9e9c"/><ellipse cx="85.4" cy="84.3" rx="3.6" ry="2.6" fill="#e2e2de"/><ellipse cx="93.1" cy="85.1" rx="3.6" ry="1.8" fill="#a9aeac"/><ellipse cx="99.9" cy="85.3" rx="3.1" ry="2.2" fill="#a9aeac"/><ellipse cx="105.5" cy="84.4" rx="2.2" ry="1.1" fill="#d8dad6"/><ellipse cx="111.6" cy="85.4" rx="3.4" ry="1.8" fill="#cfd0cb"/><ellipse cx="118.9" cy="85.8" rx="3.3" ry="1.9" fill="#cfd0cb"/><ellipse cx="125.2" cy="86.0" rx="2.1" ry="1.1" fill="#e2e2de"/><ellipse cx="130.2" cy="85.0" rx="2.8" ry="1.7" fill="#a9aeac"/><ellipse cx="136.1" cy="85.2" rx="2.3" ry="1.4" fill="#8e8a84"/><ellipse cx="142.4" cy="86.0" rx="3.3" ry="2.3" fill="#e2e2de"/><ellipse cx="149.5" cy="85.4" rx="3.4" ry="1.8" fill="#c0ac94"/><ellipse cx="156.4" cy="86.1" rx="3.0" ry="1.9" fill="#c8ccc8"/><ellipse cx="162.6" cy="84.9" rx="2.4" ry="1.3" fill="#a0a4a4"/><ellipse cx="168.9" cy="84.7" rx="3.1" ry="2.1" fill="#8e8a84"/><ellipse cx="176.4" cy="84.4" rx="3.6" ry="2.5" fill="#c8ccc8"/><ellipse cx="183.4" cy="86.1" rx="2.6" ry="1.8" fill="#a9aeac"/><ellipse cx="189.4" cy="85.4" rx="3.0" ry="2.1" fill="#c0ac94"/><ellipse cx="196.3" cy="85.8" rx="3.4" ry="1.8" fill="#c0ac94"/><ellipse cx="1.2" cy="87.1" rx="3.4" ry="1.8" fill="#cfd0cb"/><ellipse cx="8.8" cy="87.4" rx="3.7" ry="1.8" fill="#bdb5a8"/><ellipse cx="16.7" cy="86.5" rx="3.5" ry="2.5" fill="#8e8a84"/><ellipse cx="23.3" cy="87.2" rx="2.8" ry="2.0" fill="#d8dad6"/><ellipse cx="29.7" cy="86.8" rx="3.4" ry="2.3" fill="#b0a696"/><ellipse cx="36.7" cy="87.0" rx="3.2" ry="2.0" fill="#a9aeac"/><ellipse cx="43.7" cy="87.1" rx="2.8" ry="1.7" fill="#a0a4a4"/><ellipse cx="49.5" cy="86.6" rx="2.4" ry="1.5" fill="#a0a4a4"/><ellipse cx="54.7" cy="87.6" rx="2.3" ry="1.4" fill="#b0a696"/><ellipse cx="60.9" cy="87.1" rx="3.5" ry="2.5" fill="#d8dad6"/><ellipse cx="67.5" cy="86.4" rx="2.3" ry="1.5" fill="#c0ac94"/><ellipse cx="74.5" cy="87.5" rx="3.7" ry="2.2" fill="#a9aeac"/><ellipse cx="81.6" cy="86.3" rx="2.9" ry="2.0" fill="#cfd0cb"/><ellipse cx="88.0" cy="86.9" rx="2.6" ry="1.7" fill="#8e8a84"/><ellipse cx="94.3" cy="86.8" rx="2.7" ry="1.7" fill="#d8dad6"/><ellipse cx="101.3" cy="86.5" rx="3.5" ry="1.9" fill="#b0a696"/><ellipse cx="108.8" cy="88.1" rx="3.2" ry="2.3" fill="#e2e2de"/><ellipse cx="115.8" cy="87.5" rx="3.5" ry="2.1" fill="#c8ccc8"/><ellipse cx="123.4" cy="87.7" rx="3.1" ry="1.7" fill="#bdb5a8"/><ellipse cx="129.8" cy="86.8" rx="3.0" ry="2.1" fill="#a0a4a4"/><ellipse cx="136.8" cy="87.7" rx="3.1" ry="1.8" fill="#cfd0cb"/><ellipse cx="144.0" cy="87.6" rx="3.2" ry="2.3" fill="#e2e2de"/><ellipse cx="151.0" cy="87.8" rx="3.5" ry="2.3" fill="#a0a4a4"/><ellipse cx="159.1" cy="87.4" rx="3.6" ry="2.2" fill="#b8bcba"/><ellipse cx="165.9" cy="88.1" rx="2.4" ry="1.6" fill="#8e8a84"/><ellipse cx="172.1" cy="87.1" rx="3.0" ry="1.9" fill="#b8bcba"/><ellipse cx="178.2" cy="87.3" rx="2.7" ry="1.7" fill="#c0ac94"/><ellipse cx="183.7" cy="87.7" rx="2.5" ry="1.3" fill="#b0a696"/><ellipse cx="190.3" cy="87.9" rx="3.5" ry="2.4" fill="#cfd0cb"/><ellipse cx="196.6" cy="86.7" rx="2.3" ry="1.2" fill="#bdb5a8"/><ellipse cx="202.1" cy="86.6" rx="2.8" ry="2.0" fill="#9a9e9c"/><ellipse cx="2.6" cy="89.1" rx="3.6" ry="1.9" fill="#8e8a84"/><ellipse cx="10.6" cy="89.4" rx="4.1" ry="2.5" fill="#a0a4a4"/><ellipse cx="18.2" cy="90.1" rx="2.7" ry="1.8" fill="#a0a4a4"/><ellipse cx="23.9" cy="89.1" rx="2.5" ry="1.8" fill="#9a9e9c"/><ellipse cx="31.4" cy="89.3" rx="4.2" ry="3.0" fill="#bdb5a8"/><ellipse cx="39.1" cy="89.0" rx="2.8" ry="1.6" fill="#8e8a84"/><ellipse cx="46.5" cy="88.9" rx="3.9" ry="2.4" fill="#a9aeac"/><ellipse cx="53.2" cy="89.7" rx="2.5" ry="1.6" fill="#bdb5a8"/><ellipse cx="59.1" cy="90.4" rx="2.5" ry="1.7" fill="#b0a696"/><ellipse cx="65.9" cy="88.9" rx="3.3" ry="1.8" fill="#e2e2de"/><ellipse cx="72.5" cy="89.3" rx="3.0" ry="2.0" fill="#c0ac94"/><ellipse cx="79.3" cy="89.5" rx="2.8" ry="1.8" fill="#c8ccc8"/><ellipse cx="86.5" cy="90.3" rx="3.7" ry="2.3" fill="#a9aeac"/><ellipse cx="93.9" cy="89.9" rx="3.0" ry="1.8" fill="#d8dad6"/><ellipse cx="101.7" cy="89.3" rx="3.9" ry="2.2" fill="#bdb5a8"/><ellipse cx="108.5" cy="88.8" rx="2.5" ry="1.2" fill="#a0a4a4"/><ellipse cx="115.2" cy="89.7" rx="3.2" ry="1.9" fill="#a9aeac"/><ellipse cx="121.6" cy="89.4" rx="2.8" ry="1.6" fill="#a9aeac"/><ellipse cx="128.7" cy="89.9" rx="3.9" ry="2.3" fill="#c0ac94"/><ellipse cx="136.0" cy="90.0" rx="2.6" ry="1.7" fill="#d8dad6"/><ellipse cx="143.0" cy="88.5" rx="3.5" ry="2.5" fill="#8e8a84"/><ellipse cx="150.6" cy="90.4" rx="3.3" ry="2.1" fill="#c8ccc8"/><ellipse cx="158.1" cy="88.5" rx="3.7" ry="2.1" fill="#8e8a84"/><ellipse cx="166.1" cy="89.4" rx="4.0" ry="2.2" fill="#c8ccc8"/><ellipse cx="173.7" cy="90.4" rx="3.3" ry="2.2" fill="#e2e2de"/><ellipse cx="181.0" cy="89.3" rx="3.9" ry="2.4" fill="#d8dad6"/><ellipse cx="188.6" cy="90.4" rx="2.9" ry="2.0" fill="#d8dad6"/><ellipse cx="194.8" cy="90.3" rx="2.8" ry="1.5" fill="#9a9e9c"/><ellipse cx="201.1" cy="89.9" rx="3.3" ry="1.9" fill="#bdb5a8"/><ellipse cx="0.7" cy="91.7" rx="3.1" ry="2.0" fill="#cfd0cb"/><ellipse cx="8.8" cy="91.4" rx="3.9" ry="2.7" fill="#9a9e9c"/><ellipse cx="17.7" cy="91.0" rx="3.8" ry="2.3" fill="#a0a4a4"/><ellipse cx="25.2" cy="92.4" rx="3.1" ry="2.1" fill="#b0a696"/><ellipse cx="31.8" cy="92.7" rx="2.8" ry="2.0" fill="#b8bcba"/><ellipse cx="39.1" cy="92.7" rx="4.3" ry="2.3" fill="#c8ccc8"/><ellipse cx="46.7" cy="92.8" rx="2.6" ry="1.4" fill="#8e8a84"/><ellipse cx="54.3" cy="91.6" rx="4.1" ry="2.2" fill="#9a9e9c"/><ellipse cx="62.6" cy="91.4" rx="3.1" ry="1.9" fill="#b8bcba"/><ellipse cx="70.1" cy="91.6" rx="3.7" ry="2.6" fill="#b0a696"/><ellipse cx="78.1" cy="90.9" rx="3.6" ry="2.0" fill="#c8ccc8"/><ellipse cx="86.7" cy="91.8" rx="4.5" ry="2.6" fill="#b8bcba"/><ellipse cx="95.7" cy="92.1" rx="3.6" ry="2.1" fill="#c8ccc8"/><ellipse cx="103.9" cy="92.1" rx="4.2" ry="2.1" fill="#bdb5a8"/><ellipse cx="113.1" cy="91.1" rx="4.0" ry="2.8" fill="#a0a4a4"/><ellipse cx="120.9" cy="92.5" rx="3.4" ry="1.8" fill="#b0a696"/><ellipse cx="129.5" cy="92.5" rx="4.3" ry="2.3" fill="#b8bcba"/><ellipse cx="136.8" cy="91.9" rx="2.8" ry="1.4" fill="#a0a4a4"/><ellipse cx="143.5" cy="91.6" rx="3.7" ry="2.1" fill="#8e8a84"/><ellipse cx="152.2" cy="91.9" rx="4.0" ry="2.3" fill="#a0a4a4"/><ellipse cx="160.3" cy="91.9" rx="3.7" ry="2.5" fill="#cfd0cb"/><ellipse cx="169.0" cy="91.9" rx="4.4" ry="2.4" fill="#e2e2de"/><ellipse cx="177.3" cy="92.3" rx="3.6" ry="2.0" fill="#b0a696"/><ellipse cx="185.5" cy="92.6" rx="3.5" ry="1.9" fill="#e2e2de"/><ellipse cx="193.0" cy="92.1" rx="2.8" ry="1.5" fill="#b0a696"/><ellipse cx="200.3" cy="92.0" rx="4.1" ry="2.5" fill="#bdb5a8"/><ellipse cx="2.0" cy="93.8" rx="4.0" ry="2.1" fill="#c0ac94"/><ellipse cx="11.4" cy="94.8" rx="4.5" ry="3.2" fill="#9a9e9c"/><ellipse cx="20.4" cy="93.6" rx="3.8" ry="2.4" fill="#cfd0cb"/><ellipse cx="28.2" cy="94.1" rx="2.9" ry="1.8" fill="#e2e2de"/><ellipse cx="36.7" cy="93.7" rx="4.5" ry="2.5" fill="#9a9e9c"/><ellipse cx="44.7" cy="94.3" rx="3.2" ry="2.2" fill="#a9aeac"/><ellipse cx="53.1" cy="95.1" rx="4.3" ry="2.5" fill="#c8ccc8"/><ellipse cx="62.7" cy="94.8" rx="4.7" ry="2.8" fill="#c0ac94"/><ellipse cx="72.3" cy="93.8" rx="4.4" ry="2.9" fill="#b0a696"/><ellipse cx="80.8" cy="94.6" rx="3.7" ry="2.0" fill="#bdb5a8"/><ellipse cx="88.2" cy="94.8" rx="3.2" ry="2.3" fill="#cfd0cb"/><ellipse cx="96.6" cy="94.8" rx="4.6" ry="2.9" fill="#e2e2de"/><ellipse cx="104.9" cy="94.6" rx="2.7" ry="1.5" fill="#c0ac94"/><ellipse cx="113.0" cy="94.3" rx="4.4" ry="2.9" fill="#b8bcba"/><ellipse cx="122.4" cy="94.7" rx="3.8" ry="2.1" fill="#9a9e9c"/><ellipse cx="131.0" cy="93.4" rx="4.2" ry="2.6" fill="#b0a696"/><ellipse cx="139.2" cy="95.3" rx="3.7" ry="2.1" fill="#b8bcba"/><ellipse cx="146.9" cy="93.6" rx="3.5" ry="2.1" fill="#bdb5a8"/><ellipse cx="155.1" cy="94.9" rx="4.5" ry="2.6" fill="#d8dad6"/><ellipse cx="165.4" cy="94.7" rx="4.6" ry="2.6" fill="#c0ac94"/><ellipse cx="174.6" cy="94.0" rx="3.7" ry="2.6" fill="#a0a4a4"/><ellipse cx="182.6" cy="94.8" rx="3.8" ry="2.0" fill="#a9aeac"/><ellipse cx="190.4" cy="95.2" rx="3.4" ry="1.9" fill="#b0a696"/><ellipse cx="198.0" cy="93.8" rx="3.0" ry="1.8" fill="#a9aeac"/><ellipse cx="2.2" cy="96.7" rx="4.2" ry="2.8" fill="#cfd0cb"/><ellipse cx="12.2" cy="96.6" rx="5.0" ry="3.0" fill="#e2e2de"/><ellipse cx="21.7" cy="96.3" rx="4.0" ry="2.4" fill="#b8bcba"/><ellipse cx="31.3" cy="97.4" rx="4.3" ry="2.7" fill="#c8ccc8"/><ellipse cx="39.3" cy="98.0" rx="3.0" ry="2.1" fill="#e2e2de"/><ellipse cx="46.2" cy="97.2" rx="3.0" ry="2.1" fill="#c0ac94"/><ellipse cx="54.6" cy="96.9" rx="4.4" ry="3.1" fill="#b8bcba"/><ellipse cx="63.2" cy="97.6" rx="3.0" ry="1.9" fill="#d8dad6"/><ellipse cx="71.6" cy="97.6" rx="4.1" ry="2.6" fill="#c0ac94"/><ellipse cx="80.8" cy="97.5" rx="4.3" ry="2.8" fill="#bdb5a8"/><ellipse cx="90.0" cy="97.4" rx="4.4" ry="2.8" fill="#c8ccc8"/><ellipse cx="99.2" cy="96.6" rx="3.6" ry="2.4" fill="#8e8a84"/><ellipse cx="106.9" cy="97.3" rx="2.9" ry="1.6" fill="#d8dad6"/><ellipse cx="115.4" cy="96.3" rx="4.7" ry="3.1" fill="#a9aeac"/><ellipse cx="125.9" cy="96.2" rx="4.9" ry="3.1" fill="#b0a696"/><ellipse cx="136.5" cy="96.2" rx="5.0" ry="2.8" fill="#9a9e9c"/><ellipse cx="147.5" cy="96.6" rx="4.7" ry="3.1" fill="#bdb5a8"/><ellipse cx="157.8" cy="96.8" rx="4.9" ry="2.8" fill="#d8dad6"/><ellipse cx="167.0" cy="98.0" rx="4.0" ry="2.6" fill="#c8ccc8"/><ellipse cx="174.5" cy="96.1" rx="2.9" ry="1.9" fill="#c0ac94"/><ellipse cx="182.8" cy="97.3" rx="4.9" ry="3.4" fill="#c8ccc8"/><ellipse cx="191.7" cy="96.3" rx="3.3" ry="1.9" fill="#8e8a84"/><ellipse cx="199.2" cy="96.8" rx="4.0" ry="2.8" fill="#c8ccc8"/><ellipse cx="4.0" cy="100.3" rx="5.2" ry="3.5" fill="#8e8a84"/><ellipse cx="14.2" cy="100.6" rx="4.0" ry="2.5" fill="#a9aeac"/><ellipse cx="23.8" cy="98.9" rx="4.8" ry="2.7" fill="#cfd0cb"/><ellipse cx="34.4" cy="100.6" rx="4.9" ry="3.4" fill="#e2e2de"/><ellipse cx="44.3" cy="100.2" rx="4.3" ry="2.3" fill="#d8dad6"/><ellipse cx="52.4" cy="99.6" rx="3.3" ry="1.7" fill="#a9aeac"/><ellipse cx="60.8" cy="99.9" rx="3.8" ry="2.1" fill="#cfd0cb"/><ellipse cx="69.7" cy="100.3" rx="4.0" ry="2.8" fill="#e2e2de"/><ellipse cx="79.5" cy="100.1" rx="5.0" ry="3.1" fill="#9a9e9c"/><ellipse cx="89.1" cy="100.3" rx="3.4" ry="2.3" fill="#b0a696"/><ellipse cx="98.1" cy="100.1" rx="4.4" ry="3.1" fill="#a0a4a4"/><ellipse cx="107.1" cy="100.8" rx="3.9" ry="2.1" fill="#a0a4a4"/><ellipse cx="116.5" cy="100.3" rx="4.6" ry="2.9" fill="#b8bcba"/><ellipse cx="125.3" cy="99.0" rx="3.1" ry="2.2" fill="#b0a696"/><ellipse cx="134.1" cy="100.1" rx="4.6" ry="2.3" fill="#a0a4a4"/><ellipse cx="143.8" cy="99.9" rx="4.8" ry="3.1" fill="#b0a696"/><ellipse cx="154.0" cy="100.0" rx="4.1" ry="2.0" fill="#c8ccc8"/><ellipse cx="162.3" cy="100.2" rx="3.6" ry="1.9" fill="#8e8a84"/><ellipse cx="172.4" cy="100.2" rx="5.3" ry="3.0" fill="#b0a696"/><ellipse cx="182.5" cy="100.6" rx="3.8" ry="2.3" fill="#b8bcba"/><ellipse cx="191.1" cy="100.1" rx="3.9" ry="2.6" fill="#cfd0cb"/><ellipse cx="200.5" cy="100.3" rx="4.4" ry="3.2" fill="#a9aeac"/><ellipse cx="3.8" cy="102.7" rx="5.7" ry="3.2" fill="#d8dad6"/><ellipse cx="15.5" cy="103.3" rx="5.4" ry="2.7" fill="#a9aeac"/><ellipse cx="26.4" cy="103.3" rx="5.2" ry="3.2" fill="#cfd0cb"/><ellipse cx="38.8" cy="102.2" rx="5.8" ry="4.1" fill="#b8bcba"/><ellipse cx="50.2" cy="102.4" rx="4.4" ry="2.7" fill="#b8bcba"/><ellipse cx="60.8" cy="102.1" rx="4.8" ry="3.4" fill="#cfd0cb"/><ellipse cx="72.6" cy="103.9" rx="5.6" ry="2.9" fill="#a0a4a4"/><ellipse cx="83.5" cy="103.5" rx="4.3" ry="3.0" fill="#cfd0cb"/><ellipse cx="93.0" cy="103.7" rx="4.4" ry="2.4" fill="#e2e2de"/><ellipse cx="104.6" cy="103.7" rx="5.8" ry="3.7" fill="#a9aeac"/><ellipse cx="116.3" cy="102.1" rx="5.0" ry="3.4" fill="#bdb5a8"/><ellipse cx="126.6" cy="103.9" rx="4.0" ry="2.4" fill="#b8bcba"/><ellipse cx="136.3" cy="102.3" rx="4.6" ry="2.9" fill="#a0a4a4"/><ellipse cx="147.0" cy="102.9" rx="4.8" ry="2.9" fill="#8e8a84"/><ellipse cx="156.1" cy="102.4" rx="3.8" ry="2.7" fill="#cfd0cb"/><ellipse cx="165.9" cy="103.1" rx="5.0" ry="2.7" fill="#cfd0cb"/><ellipse cx="175.8" cy="102.4" rx="3.9" ry="2.4" fill="#c0ac94"/><ellipse cx="184.6" cy="102.2" rx="3.8" ry="2.0" fill="#a9aeac"/><ellipse cx="194.5" cy="102.6" rx="5.3" ry="3.1" fill="#b8bcba"/><ellipse cx="2.5" cy="105.6" rx="5.9" ry="4.0" fill="#c8ccc8"/><ellipse cx="14.9" cy="106.3" rx="5.0" ry="2.5" fill="#b8bcba"/><ellipse cx="25.7" cy="106.7" rx="5.2" ry="3.1" fill="#bdb5a8"/><ellipse cx="35.4" cy="107.0" rx="3.7" ry="2.3" fill="#b0a696"/><ellipse cx="45.2" cy="106.7" rx="5.1" ry="2.7" fill="#bdb5a8"/><ellipse cx="56.9" cy="105.7" rx="5.0" ry="3.2" fill="#9a9e9c"/><ellipse cx="68.3" cy="105.8" rx="5.9" ry="3.9" fill="#9a9e9c"/><ellipse cx="79.0" cy="107.2" rx="3.9" ry="2.1" fill="#e2e2de"/><ellipse cx="88.0" cy="106.3" rx="4.5" ry="3.1" fill="#b0a696"/><ellipse cx="99.7" cy="106.1" rx="6.1" ry="3.5" fill="#b8bcba"/><ellipse cx="111.3" cy="107.0" rx="4.6" ry="2.9" fill="#cfd0cb"/><ellipse cx="120.8" cy="105.7" rx="3.8" ry="2.4" fill="#b0a696"/><ellipse cx="128.9" cy="106.1" rx="3.7" ry="2.3" fill="#9a9e9c"/><ellipse cx="138.3" cy="105.4" rx="4.5" ry="3.0" fill="#c8ccc8"/><ellipse cx="147.7" cy="105.7" rx="3.7" ry="2.3" fill="#8e8a84"/><ellipse cx="156.0" cy="106.8" rx="4.3" ry="2.5" fill="#e2e2de"/><ellipse cx="165.0" cy="105.8" rx="4.0" ry="2.4" fill="#9a9e9c"/><ellipse cx="173.0" cy="106.2" rx="3.6" ry="2.0" fill="#8e8a84"/><ellipse cx="181.2" cy="106.3" rx="3.9" ry="2.3" fill="#e2e2de"/><ellipse cx="189.8" cy="106.8" rx="3.6" ry="1.8" fill="#b0a696"/><ellipse cx="198.6" cy="105.7" rx="4.2" ry="2.7" fill="#cfd0cb"/><ellipse cx="0.5" cy="109.7" rx="4.3" ry="2.5" fill="#d8dad6"/><ellipse cx="10.0" cy="109.2" rx="4.5" ry="2.7" fill="#e2e2de"/><ellipse cx="21.1" cy="110.7" rx="5.2" ry="3.1" fill="#b8bcba"/><ellipse cx="33.3" cy="109.4" rx="5.8" ry="3.9" fill="#bdb5a8"/><ellipse cx="46.2" cy="109.5" rx="6.2" ry="3.3" fill="#b0a696"/><ellipse cx="59.1" cy="109.7" rx="5.5" ry="3.2" fill="#9a9e9c"/><ellipse cx="70.0" cy="110.5" rx="4.1" ry="2.4" fill="#cfd0cb"/><ellipse cx="81.7" cy="110.4" rx="6.5" ry="3.4" fill="#b8bcba"/><ellipse cx="93.5" cy="110.1" rx="3.8" ry="2.2" fill="#a9aeac"/><ellipse cx="102.8" cy="109.2" rx="4.4" ry="2.6" fill="#bdb5a8"/><ellipse cx="113.6" cy="109.5" rx="5.1" ry="3.5" fill="#9a9e9c"/><ellipse cx="126.4" cy="110.5" rx="6.3" ry="3.3" fill="#8e8a84"/><ellipse cx="139.2" cy="110.6" rx="6.0" ry="3.8" fill="#e2e2de"/><ellipse cx="153.0" cy="110.8" rx="6.4" ry="4.4" fill="#e2e2de"/><ellipse cx="166.1" cy="109.6" rx="5.3" ry="3.4" fill="#cfd0cb"/><ellipse cx="175.9" cy="110.2" rx="4.0" ry="2.2" fill="#d8dad6"/><ellipse cx="186.2" cy="109.1" rx="6.0" ry="3.8" fill="#cfd0cb"/><ellipse cx="198.2" cy="109.5" rx="4.3" ry="2.2" fill="#c0ac94"/><ellipse cx="24" cy="91.5" rx="15.5" ry="7" fill="#c9cccb"/>
<ellipse cx="24" cy="89.8" rx="12" ry="3.8" fill="#dcdedc"/>
</g>
<g filter="url(#bl4s)">
<ellipse cx="135.5" cy="14.6" rx="6.3" ry="3" fill="#8fa2a4"/>
<ellipse cx="135.5" cy="19.8" rx="10.2" ry="2.5" fill="#72888a"/>
</g>
<g filter="url(#bl4b)">
<ellipse cx="134" cy="29" rx="14" ry="6" fill="#e8e6e0"/>
<ellipse cx="134" cy="45" rx="20" ry="10" fill="#e2dfd8"/>
<ellipse cx="134" cy="68" rx="24" ry="10" fill="#d8d4cc"/>
</g>
<rect x="34.6" y="23" width="125.8" height="64.6" fill="#f3ebdf" opacity="0.9"/>
<circle cx="38.5" cy="26" r="1.3" fill="none" stroke="#b0a090" stroke-width="0.5"/>
<circle cx="156.5" cy="26" r="1.3" fill="none" stroke="#b0a090" stroke-width="0.5"/>
<circle cx="156.5" cy="84" r="1.3" fill="none" stroke="#b0a090" stroke-width="0.5"/>
<g filter="url(#bl4s)">
<circle cx="81.8" cy="35.5" r="2.9" fill="#bb7a42"/><circle cx="81.2" cy="35" r="1" fill="#f0d8b8"/>
<path d="M96.2 26.8 Q93 26.5 92.2 29.5 Q94 28.6 95.4 29.2 Q93.2 30 93 32 Q94.8 30.4 95.8 30.2 L95.3 38.6 L96.5 38.6 L96.6 30.2 Q98 30.6 99.6 32 Q99.2 29.6 97 29.2 Q99 28.6 100.6 29.6 Q99.4 26.6 96.2 26.8Z" fill="#b07640"/>
<path d="M106 38.8 L107 35 L109.5 33.2 L110.5 31.3 L111.6 33.6 L111.6 36 L114 38 L113.4 38.8Z" fill="#b87a42"/>
</g>
<g transform="translate(97.5 0) scale(0.95 1)"><text x="0" y="51.3" font-family="Liberation Sans" font-weight="bold" font-size="5.4" letter-spacing="0.3" fill="#141210" stroke="#141210" stroke-width="0.1" text-anchor="middle">RECREATION DESIGN</text></g>
<rect x="44" y="55.6" width="108" height="1.2" fill="#c55c32"/>
</svg></div>
<div class="num" style="left:35px;top:396px">4</div>

<!-- slide 5 -->
<div class="a" style="left:262px;top:279px;width:199px;height:113px;background:#fbf7ef"></div>
<div class="thumb" style="left:264px;top:281px;background:#e2c79f">
<svg width="195" height="109" viewBox="0 0 195 109" style="display:block">
<defs>
<linearGradient id="g5" x1="0" x2="1" y1="0" y2="1"><stop offset="0" stop-color="#e9caa2"/><stop offset="0.5" stop-color="#e5c398"/><stop offset="1" stop-color="#dfbc90"/></linearGradient>
<radialGradient id="g5t" cx="0.5" cy="0.5" r="0.5"><stop offset="0" stop-color="#7c9894"/><stop offset="0.45" stop-color="#6a8c8a"/><stop offset="0.8" stop-color="#4f7a7c"/><stop offset="1" stop-color="#5e7e7e"/></radialGradient>
<filter id="bl5" x="-10%" y="-10%" width="120%" height="120%"><feGaussianBlur stdDeviation="0.9"/></filter>
<clipPath id="c5"><rect x="7.5" y="7.5" width="180" height="94"/></clipPath>
</defs>
<rect width="195" height="109" fill="url(#g5)"/>
<rect x="6.6" y="6.6" width="181.6" height="95.5" fill="#2c2a28"/>
<rect x="7.5" y="7.5" width="180" height="94" fill="#737875"/>
<g clip-path="url(#c5)"><g filter="url(#bl5)">
<ellipse cx="40" cy="40" rx="40" ry="32" fill="#8a8d89"/>
<ellipse cx="30" cy="90" rx="40" ry="22" fill="#7b7f7b"/>
<ellipse cx="160" cy="35" rx="40" ry="30" fill="#898d89"/>
<ellipse cx="165" cy="80" rx="30" ry="28" fill="#858985"/>
<circle cx="106" cy="52" r="40" fill="#728482"/>
<circle cx="106" cy="52" r="30" fill="#668688"/>
<circle cx="106" cy="52" r="18" fill="#7e9694"/>
<g fill="none"><path d="M109.5 62.7 Q105.4 76.1 116.5 84.5" stroke="#5f8c8e" stroke-width="1.1" opacity="0.75"/><path d="M106.0 63.9 Q97.6 76.0 106.0 88.1" stroke="#5f8c8e" stroke-width="1.1" opacity="0.75"/><path d="M102.1 64.0 Q89.7 73.4 94.2 88.2" stroke="#5f8c8e" stroke-width="1.1" opacity="0.75"/><path d="M98.2 62.8 Q82.6 68.1 82.3 84.6" stroke="#5f8c8e" stroke-width="1.1" opacity="0.75"/><path d="M94.6 60.3 Q77.2 60.6 71.6 77.0" stroke="#5f8c8e" stroke-width="1.1" opacity="0.75"/><path d="M91.8 56.6 Q74.3 51.2 63.2 65.9" stroke="#5f8c8e" stroke-width="1.1" opacity="0.75"/><path d="M90.3 52.0 Q74.4 40.9 58.5 52.0" stroke="#a4a8a3" stroke-width="1.8" opacity="0.6"/><path d="M90.2 46.9 Q77.8 30.5 58.2 36.5" stroke="#a4a8a3" stroke-width="1.8" opacity="0.6"/><path d="M91.8 41.7 Q84.7 21.2 63.0 20.8" stroke="#a4a8a3" stroke-width="1.8" opacity="0.6"/><path d="M95.1 37.0 Q94.7 14.1 73.0 6.6" stroke="#a4a8a3" stroke-width="1.8" opacity="0.6"/><path d="M99.9 33.3 Q107.0 10.2 87.7 -4.4" stroke="#a4a8a3" stroke-width="1.8" opacity="0.6"/><path d="M106.0 31.2 Q120.7 10.3 106.0 -10.7" stroke="#a4a8a3" stroke-width="1.8" opacity="0.6"/><path d="M112.8 31.1 Q134.4 14.9 126.5 -11.0" stroke="#a4a8a3" stroke-width="1.8" opacity="0.6"/><path d="M119.6 33.2 Q146.6 23.9 147.1 -4.6" stroke="#a4a8a3" stroke-width="1.8" opacity="0.6"/><path d="M125.8 37.6 Q156.0 37.1 165.8 8.5" stroke="#a4a8a3" stroke-width="1.8" opacity="0.6"/><path d="M130.6 44.0 Q161.1 53.3 180.4 27.8" stroke="#a4a8a3" stroke-width="1.8" opacity="0.6"/><path d="M133.4 52.0 Q161.0 71.3 188.6 52.0" stroke="#a4a8a3" stroke-width="1.8" opacity="0.6"/><path d="M133.5 60.9 Q155.0 89.4 189.0 79.0" stroke="#a4a8a3" stroke-width="1.8" opacity="0.6"/><path d="M130.7 70.0 Q143.0 105.6 180.7 106.2" stroke="#a4a8a3" stroke-width="1.8" opacity="0.6"/><path d="M125.0 78.1 Q125.7 117.9 163.3 130.9" stroke="#a4a8a3" stroke-width="1.8" opacity="0.6"/><path d="M116.5 84.5 Q104.3 124.7 137.8 150.0" stroke="#a4a8a3" stroke-width="1.8" opacity="0.6"/><path d="M106.0 88.1 Q80.5 124.5 106.0 160.9" stroke="#a4a8a3" stroke-width="1.8" opacity="0.6"/><path d="M94.2 88.2 Q56.7 116.5 70.4 161.5" stroke="#a4a8a3" stroke-width="1.8" opacity="0.6"/><path d="M82.3 84.6 Q35.4 100.8 34.5 150.4" stroke="#a4a8a3" stroke-width="1.8" opacity="0.6"/><path d="M71.6 77.0 Q19.1 77.9 2.0 127.6" stroke="#a4a8a3" stroke-width="1.8" opacity="0.6"/><path d="M63.2 65.9 Q10.2 49.7 -23.2 94.0" stroke="#a4a8a3" stroke-width="1.8" opacity="0.6"/><path d="M58.5 52.0 Q10.4 18.4 -37.6 52.0" stroke="#a4a8a3" stroke-width="1.8" opacity="0.6"/><path d="M58.2 36.5 Q20.9 -13.0 -38.3 5.1" stroke="#a4a8a3" stroke-width="1.8" opacity="0.6"/><path d="M63.0 20.8 Q41.7 -41.1 -23.7 -42.3" stroke="#a4a8a3" stroke-width="1.8" opacity="0.6"/><path d="M73.0 6.6 Q71.8 -62.6 6.4 -85.1" stroke="#a4a8a3" stroke-width="1.8" opacity="0.6"/><path d="M87.7 -4.4 Q109.0 -74.3 50.7 -118.3" stroke="#a4a8a3" stroke-width="1.8" opacity="0.6"/><path d="M106.0 -10.7 Q150.3 -74.0 106.0 -137.3" stroke="#a4a8a3" stroke-width="1.8" opacity="0.6"/><path d="M126.5 -11.0 Q191.7 -60.1 167.8 -138.2" stroke="#a4a8a3" stroke-width="1.8" opacity="0.6"/><path d="M147.1 -4.6 Q228.7 -32.7 230.2 -119.0" stroke="#a4a8a3" stroke-width="1.8" opacity="0.6"/><path d="M165.8 8.5 Q257.0 6.9 286.7 -79.3" stroke="#a4a8a3" stroke-width="1.8" opacity="0.6"/><path d="M180.4 27.8 Q272.5 56.0 330.5 -21.0" stroke="#a4a8a3" stroke-width="1.8" opacity="0.6"/><path d="M188.6 52.0 Q272.1 110.4 355.5 52.0" stroke="#a4a8a3" stroke-width="1.8" opacity="0.6"/><path d="M189.0 79.0 Q253.8 164.9 356.8 133.5" stroke="#a4a8a3" stroke-width="1.8" opacity="0.6"/><path d="M180.7 106.2 Q217.7 213.8 331.4 215.8" stroke="#a4a8a3" stroke-width="1.8" opacity="0.6"/><path d="M163.3 130.9 Q165.4 251.1 279.1 290.2" stroke="#a4a8a3" stroke-width="1.8" opacity="0.6"/><path d="M137.8 150.0 Q100.7 271.5 202.2 348.0" stroke="#a4a8a3" stroke-width="1.8" opacity="0.6"/><path d="M106.0 160.9 Q29.0 270.9 106.0 380.9" stroke="#a4a8a3" stroke-width="1.8" opacity="0.6"/><path d="M70.4 161.5 Q-42.9 246.9 -1.4 382.6" stroke="#a4a8a3" stroke-width="1.8" opacity="0.6"/><path d="M34.5 150.4 Q-107.3 199.3 -109.9 349.2" stroke="#a4a8a3" stroke-width="1.8" opacity="0.6"/><path d="M2.0 127.6 Q-156.5 130.3 -208.1 280.2" stroke="#a4a8a3" stroke-width="1.8" opacity="0.6"/><path d="M-23.2 94.0 Q-183.4 45.0 -284.2 178.8" stroke="#a4a8a3" stroke-width="1.8" opacity="0.6"/><path d="M-37.6 52.0 Q-182.6 -49.5 -327.6 52.0" stroke="#a4a8a3" stroke-width="1.8" opacity="0.6"/><path d="M-38.3 5.1 Q-150.9 -144.3 -329.8 -89.6" stroke="#a4a8a3" stroke-width="1.8" opacity="0.6"/><path d="M-23.7 -42.3 Q-88.1 -229.2 -285.8 -232.6" stroke="#a4a8a3" stroke-width="1.8" opacity="0.6"/><path d="M6.4 -85.1 Q2.7 -294.0 -194.8 -362.0" stroke="#a4a8a3" stroke-width="1.8" opacity="0.6"/><path d="M50.7 -118.3 Q115.2 -329.5 -61.1 -462.4" stroke="#a4a8a3" stroke-width="1.8" opacity="0.6"/><path d="M106.0 -137.3 Q239.8 -328.4 106.0 -519.6" stroke="#a4a8a3" stroke-width="1.8" opacity="0.6"/><path d="M167.8 -138.2 Q364.7 -286.7 292.7 -522.5" stroke="#a4a8a3" stroke-width="1.8" opacity="0.6"/><path d="M230.2 -119.0 Q476.6 -203.9 481.2 -464.4" stroke="#a4a8a3" stroke-width="1.8" opacity="0.6"/><path d="M286.7 -79.3 Q562.1 -84.2 651.8 -344.5" stroke="#a4a8a3" stroke-width="1.8" opacity="0.6"/><path d="M330.5 -21.0 Q608.9 64.1 784.1 -168.3" stroke="#a4a8a3" stroke-width="1.8" opacity="0.6"/><path d="M355.5 52.0 Q607.5 228.4 859.5 52.0" stroke="#a4a8a3" stroke-width="1.8" opacity="0.6"/><path d="M356.8 133.5 Q552.4 393.1 863.3 298.1" stroke="#a4a8a3" stroke-width="1.8" opacity="0.6"/><path d="M331.4 215.8 Q443.3 540.6 786.8 546.6" stroke="#a4a8a3" stroke-width="1.8" opacity="0.6"/><path d="M279.1 290.2 Q285.5 653.2 628.7 771.5" stroke="#a4a8a3" stroke-width="1.8" opacity="0.6"/><path d="M202.2 348.0 Q90.1 714.9 396.4 945.8" stroke="#a4a8a3" stroke-width="1.8" opacity="0.6"/><path d="M106.0 380.9 Q-126.5 713.1 106.0 1045.2" stroke="#a4a8a3" stroke-width="1.8" opacity="0.6"/><path d="M-1.4 382.6 Q-343.6 640.5 -218.4 1050.3" stroke="#a4a8a3" stroke-width="1.8" opacity="0.6"/><path d="M-109.9 349.2 Q-538.1 496.7 -546.0 949.5" stroke="#a4a8a3" stroke-width="1.8" opacity="0.6"/><path d="M-208.1 280.2 Q-686.6 288.6 -842.4 741.1" stroke="#a4a8a3" stroke-width="1.8" opacity="0.6"/><path d="M-284.2 178.8 Q-767.9 31.0 -1072.3 434.9" stroke="#a4a8a3" stroke-width="1.8" opacity="0.6"/><path d="M-327.6 52.0 Q-765.5 -254.5 -1203.3 52.0" stroke="#a4a8a3" stroke-width="1.8" opacity="0.6"/><path d="M-329.8 -89.6 Q-669.8 -540.7 -1210.0 -375.6" stroke="#a4a8a3" stroke-width="1.8" opacity="0.6"/></g>
<polyline points="109.0,52.0 109.0,52.1 109.0,52.2 109.0,52.3 109.0,52.4 109.0,52.5 109.0,52.6 109.0,52.7 109.0,52.8 109.0,52.9 109.0,53.0 109.0,53.1 109.0,53.2 109.0,53.3 108.9,53.4 108.9,53.5 108.9,53.6 108.8,53.7 108.8,53.8 108.8,53.9 108.7,54.0 108.7,54.1 108.6,54.2 108.6,54.3 108.5,54.3 108.4,54.4 108.4,54.5 108.3,54.6 108.2,54.7 108.2,54.8 108.1,54.9 108.0,54.9 107.9,55.0 107.8,55.1 107.7,55.2 107.7,55.2 107.6,55.3 107.5,55.4 107.4,55.4 107.3,55.5 107.2,55.6 107.0,55.6 106.9,55.7 106.8,55.7 106.7,55.8 106.6,55.8 106.5,55.8 106.4,55.9 106.2,55.9 106.1,55.9 106.0,56.0 105.9,56.0 105.7,56.0 105.6,56.0 105.5,56.0 105.4,56.0 105.2,56.0 105.1,56.0 105.0,56.0 104.8,56.0 104.7,56.0 104.6,56.0 104.4,55.9 104.3,55.9 104.2,55.9 104.0,55.8 103.9,55.8 103.8,55.7 103.7,55.7 103.5,55.6 103.4,55.6 103.3,55.5 103.2,55.4 103.0,55.4 102.9,55.3 102.8,55.2 102.7,55.1 102.6,55.0 102.4,54.9 102.3,54.8 102.2,54.7 102.1,54.6 102.0,54.5 101.9,54.4 101.8,54.3 101.7,54.2 101.6,54.1 101.5,53.9 101.5,53.8 101.4,53.7 101.3,53.5 101.2,53.4 101.2,53.2 101.1,53.1 101.0,52.9 101.0,52.8 100.9,52.6 100.9,52.5 100.9,52.3 100.8,52.2 100.8,52.0 100.8,51.8 100.7,51.7 100.7,51.5 100.7,51.3 100.7,51.2 100.7,51.0 100.7,50.8 100.7,50.6 100.7,50.5 100.8,50.3 100.8,50.1 100.8,49.9 100.9,49.8 100.9,49.6 101.0,49.4 101.0,49.3 101.1,49.1 101.1,48.9 101.2,48.7 101.3,48.6 101.4,48.4 101.5,48.2 101.6,48.1 101.7,47.9 101.8,47.8 101.9,47.6 102.0,47.5 102.1,47.3 102.2,47.2 102.4,47.0 102.5,46.9 102.7,46.7 102.8,46.6 103.0,46.5 103.1,46.4 103.3,46.2 103.5,46.1 103.6,46.0 103.8,45.9 104.0,45.8 104.2,45.7 104.4,45.6 104.6,45.5 104.8,45.5 105.0,45.4 105.2,45.3 105.4,45.3 105.6,45.2 105.8,45.2 106.0,45.1 106.2,45.1 106.4,45.1 106.7,45.0 106.9,45.0 107.1,45.0 107.3,45.0 107.6,45.0 107.8,45.0 108.0,45.1 108.2,45.1 108.5,45.1 108.7,45.2 108.9,45.2 109.2,45.3 109.4,45.3 109.6,45.4 109.8,45.5 110.1,45.6 110.3,45.7 110.5,45.8 110.7,45.9 110.9,46.0 111.2,46.1 111.4,46.3 111.6,46.4 111.8,46.6 112.0,46.7 112.2,46.9 112.4,47.1 112.6,47.2 112.7,47.4 112.9,47.6 113.1,47.8 113.3,48.0 113.4,48.2 113.6,48.4 113.7,48.7 113.9,48.9 114.0,49.1 114.2,49.4 114.3,49.6 114.4,49.8 114.5,50.1 114.6,50.4 114.7,50.6 114.8,50.9 114.9,51.2 114.9,51.4 115.0,51.7 115.1,52.0 115.1,52.3 115.1,52.6 115.2,52.9 115.2,53.2 115.2,53.5 115.2,53.8 115.2,54.1 115.2,54.4 115.1,54.7 115.1,55.0 115.1,55.3 115.0,55.6 114.9,55.9 114.9,56.2 114.8,56.5 114.7,56.8 114.6,57.1 114.4,57.4 114.3,57.7 114.2,57.9 114.0,58.2 113.9,58.5 113.7,58.8 113.5,59.1 113.4,59.4 113.2,59.6 113.0,59.9 112.7,60.1 112.5,60.4 112.3,60.7 112.0,60.9 111.8,61.1 111.5,61.4 111.3,61.6 111.0,61.8 110.7,62.0 110.4,62.2 110.1,62.4 109.8,62.6 109.5,62.7 109.2,62.9 108.8,63.1 108.5,63.2 108.2,63.3 107.8,63.5 107.5,63.6 107.1,63.7 106.7,63.8 106.4,63.9 106.0,63.9 105.6,64.0 105.2,64.1 104.9,64.1 104.5,64.1 104.1,64.1 103.7,64.1 103.3,64.1 102.9,64.1 102.5,64.1 102.1,64.0 101.7,63.9 101.3,63.9 100.9,63.8 100.5,63.7 100.1,63.6 99.7,63.4 99.3,63.3 98.9,63.1 98.5,63.0 98.2,62.8 97.8,62.6 97.4,62.4 97.0,62.2 96.7,61.9 96.3,61.7 95.9,61.4 95.6,61.2 95.3,60.9 94.9,60.6 94.6,60.3 94.3,60.0 94.0,59.6 93.7,59.3 93.4,58.9 93.1,58.6 92.8,58.2 92.6,57.8 92.3,57.4 92.1,57.0 91.8,56.6 91.6,56.2 91.4,55.7 91.2,55.3 91.0,54.9 90.9,54.4 90.7,53.9 90.6,53.5 90.5,53.0 90.4,52.5 90.3,52.0 90.2,51.5 90.1,51.0 90.1,50.5 90.0,50.0 90.0,49.5 90.0,49.0 90.0,48.4 90.1,47.9 90.1,47.4 90.2,46.9 90.3,46.3 90.4,45.8 90.5,45.3 90.6,44.8 90.8,44.2 90.9,43.7 91.1,43.2 91.3,42.7 91.5,42.2 91.8,41.7 92.0,41.2 92.3,40.7 92.6,40.2 92.9,39.7 93.2,39.2 93.6,38.8 93.9,38.3 94.3,37.8 94.7,37.4 95.1,37.0 95.5,36.5 95.9,36.1 96.4,35.7 96.8,35.4 97.3,35.0 97.8,34.6 98.3,34.3 98.9,33.9 99.4,33.6 99.9,33.3 100.5,33.0 101.1,32.8 101.6,32.5 102.2,32.3 102.8,32.1 103.5,31.9 104.1,31.7 104.7,31.5 105.4,31.4 106.0,31.2 106.7,31.1 107.3,31.1 108.0,31.0 108.7,30.9 109.3,30.9 110.0,30.9 110.7,30.9 111.4,31.0 112.1,31.1 112.8,31.1 113.5,31.2 114.2,31.4 114.9,31.5 115.5,31.7 116.2,31.9 116.9,32.1 117.6,32.4 118.3,32.6 119.0,32.9 119.6,33.2 120.3,33.6 120.9,33.9 121.6,34.3 122.2,34.7 122.8,35.2 123.5,35.6 124.1,36.1 124.7,36.6 125.2,37.1 125.8,37.6 126.4,38.2 126.9,38.7 127.4,39.3 127.9,39.9 128.4,40.6 128.9,41.2 129.4,41.9 129.8,42.6 130.2,43.3 130.6,44.0 131.0,44.7 131.4,45.5 131.7,46.3 132.0,47.0 132.3,47.8 132.5,48.6 132.8,49.5 133.0,50.3 133.2,51.1 133.4,52.0 133.5,52.9 133.6,53.7 133.7,54.6 133.7,55.5 133.8,56.4 133.8,57.3 133.8,58.2 133.7,59.1 133.6,60.0 133.5,60.9 133.4,61.8 133.2,62.8 133.0,63.7 132.7,64.6 132.5,65.5 132.2,66.4 131.9,67.3 131.5,68.2 131.1,69.1 130.7,70.0 130.3,70.8 129.8,71.7 129.3,72.5 128.8,73.4 128.2,74.2 127.6,75.0 127.0,75.8 126.4,76.6 125.7,77.4 125.0,78.1 124.3,78.9 123.5,79.6 122.7,80.3 121.9,80.9 121.1,81.6 120.2,82.2 119.3,82.8 118.4,83.4 117.5,83.9 116.5,84.5 115.6,85.0 114.6,85.4 113.6,85.9 112.5,86.3 111.5,86.7 110.4,87.0 109.3,87.3 108.2,87.6 107.1,87.8 106.0,88.1 104.9,88.2 103.7,88.4 102.5,88.5 101.4,88.6 100.2,88.6 99.0,88.6 97.8,88.6 96.6,88.5 95.4,88.4 94.2,88.2 93.0,88.1 91.8,87.8 90.6,87.6 89.4,87.3 88.2,86.9 87.0,86.5 85.8,86.1 84.7,85.6 83.5,85.1 82.3,84.6 81.2,84.0 80.0,83.4 78.9,82.7 77.8,82.0 76.7,81.3 75.6,80.5 74.6,79.7 73.6,78.8 72.5,77.9 71.6,77.0 70.6,76.1 69.7,75.1 68.7,74.0 67.9,73.0 67.0,71.9 66.2,70.7 65.4,69.6 64.6,68.4 63.9,67.2 63.2,65.9 62.6,64.6 61.9,63.3 61.4,62.0 60.8,60.6 60.3,59.2 59.9,57.8 59.4,56.4 59.1,55.0 58.7,53.5 58.5,52.0 58.2,50.5 58.0,49.0 57.9,47.5 57.8,45.9 57.7,44.4 57.7,42.8 57.8,41.2 57.9,39.6 58.0,38.1 58.2,36.5 58.5,34.9 58.8,33.3 59.1,31.7 59.5,30.1 60.0,28.6 60.5,27.0 61.0,25.4 61.7,23.9 62.3,22.3 63.0,20.8 63.8,19.3 64.6,17.8 65.5,16.3 66.4,14.8 67.4,13.4 68.4,12.0 69.5,10.6 70.6,9.2 71.8,7.9 73.0,6.6 74.3,5.3 75.6,4.1 77.0,2.9 78.4,1.7 79.8,0.6 81.3,-0.5 82.8,-1.5 84.4,-2.5 86.0,-3.5 87.7,-4.4 89.4,-5.3 91.1,-6.1 92.8,-6.8 94.6,-7.6 96.5,-8.2 98.3,-8.8 100.2,-9.4 102.1,-9.9 104.0,-10.3 106.0,-10.7 108.0,-11.0 110.0,-11.2 112.0,-11.4 114.0,-11.6 116.1,-11.6 118.1,-11.6 120.2,-11.6 122.3,-11.4 124.4,-11.3 126.5,-11.0 128.6,-10.7 130.7,-10.3 132.7,-9.8 134.8,-9.3 136.9,-8.7 139.0,-8.0 141.0,-7.3 143.1,-6.5 145.1,-5.6 147.1,-4.6 149.1,-3.6 151.1,-2.5 153.1,-1.4 155.0,-0.2 156.9,1.1 158.7,2.5 160.6,3.9 162.4,5.4 164.1,6.9 165.8,8.5 167.5,10.2 169.2,11.9 170.7,13.7 172.3,15.6 173.8,17.5 175.2,19.4 176.6,21.5 177.9,23.5 179.2,25.7 180.4,27.8 181.5,30.1 182.6,32.3 183.6,34.7 184.5,37.0 185.4,39.4 186.2,41.9 186.9,44.4 187.6,46.9 188.1,49.4" fill="none" stroke="#a9b2ae" stroke-width="1.6" opacity="0.7"/>
</g></g>
<circle cx="12" cy="12" r="1.9" fill="#c4c4c4"/>
<circle cx="183" cy="12" r="1.9" fill="#c4c4c4"/>
<circle cx="12" cy="98" r="1.9" fill="#c4c4c4"/>
<circle cx="183" cy="98" r="1.9" fill="#c4c4c4"/>
<g transform="translate(101.6 0) scale(0.89 1)"><text x="0" y="51.1" font-family="Liberation Sans" font-weight="bold" font-size="14.2" fill="#fbfbfb" text-anchor="middle">CONTACT US</text></g>
<rect x="35.8" y="56.9" width="131" height="1" fill="#f4f4f4"/>
<text x="101" y="63.1" font-family="Liberation Sans" font-weight="bold" font-size="3.7" fill="#f4f4f4" stroke="#f4f4f4" stroke-width="0.15" text-anchor="middle">someone@example.com</text>
</svg></div>
<div class="num" style="left:264px;top:396px">5</div>

<!-- zoom slider -->
<div class="a" style="left:538px;top:504px;width:6px;height:2px;background:#c8c8c8"></div>
<div class="a" style="left:558px;top:505px;width:120px;height:1px;background:#c8c8c8"></div>
<div class="a" style="left:593px;top:501px;width:3px;height:8px;background:#c8c8c8"></div>
<div class="a" style="left:618px;top:502px;width:1px;height:8px;background:#c8c8c8"></div>
<div class="a" style="left:692px;top:504px;width:8px;height:2px;background:#d8d8d8"></div>
<div class="a" style="left:695px;top:501px;width:2px;height:8px;background:#d8d8d8"></div>
</body></html>
